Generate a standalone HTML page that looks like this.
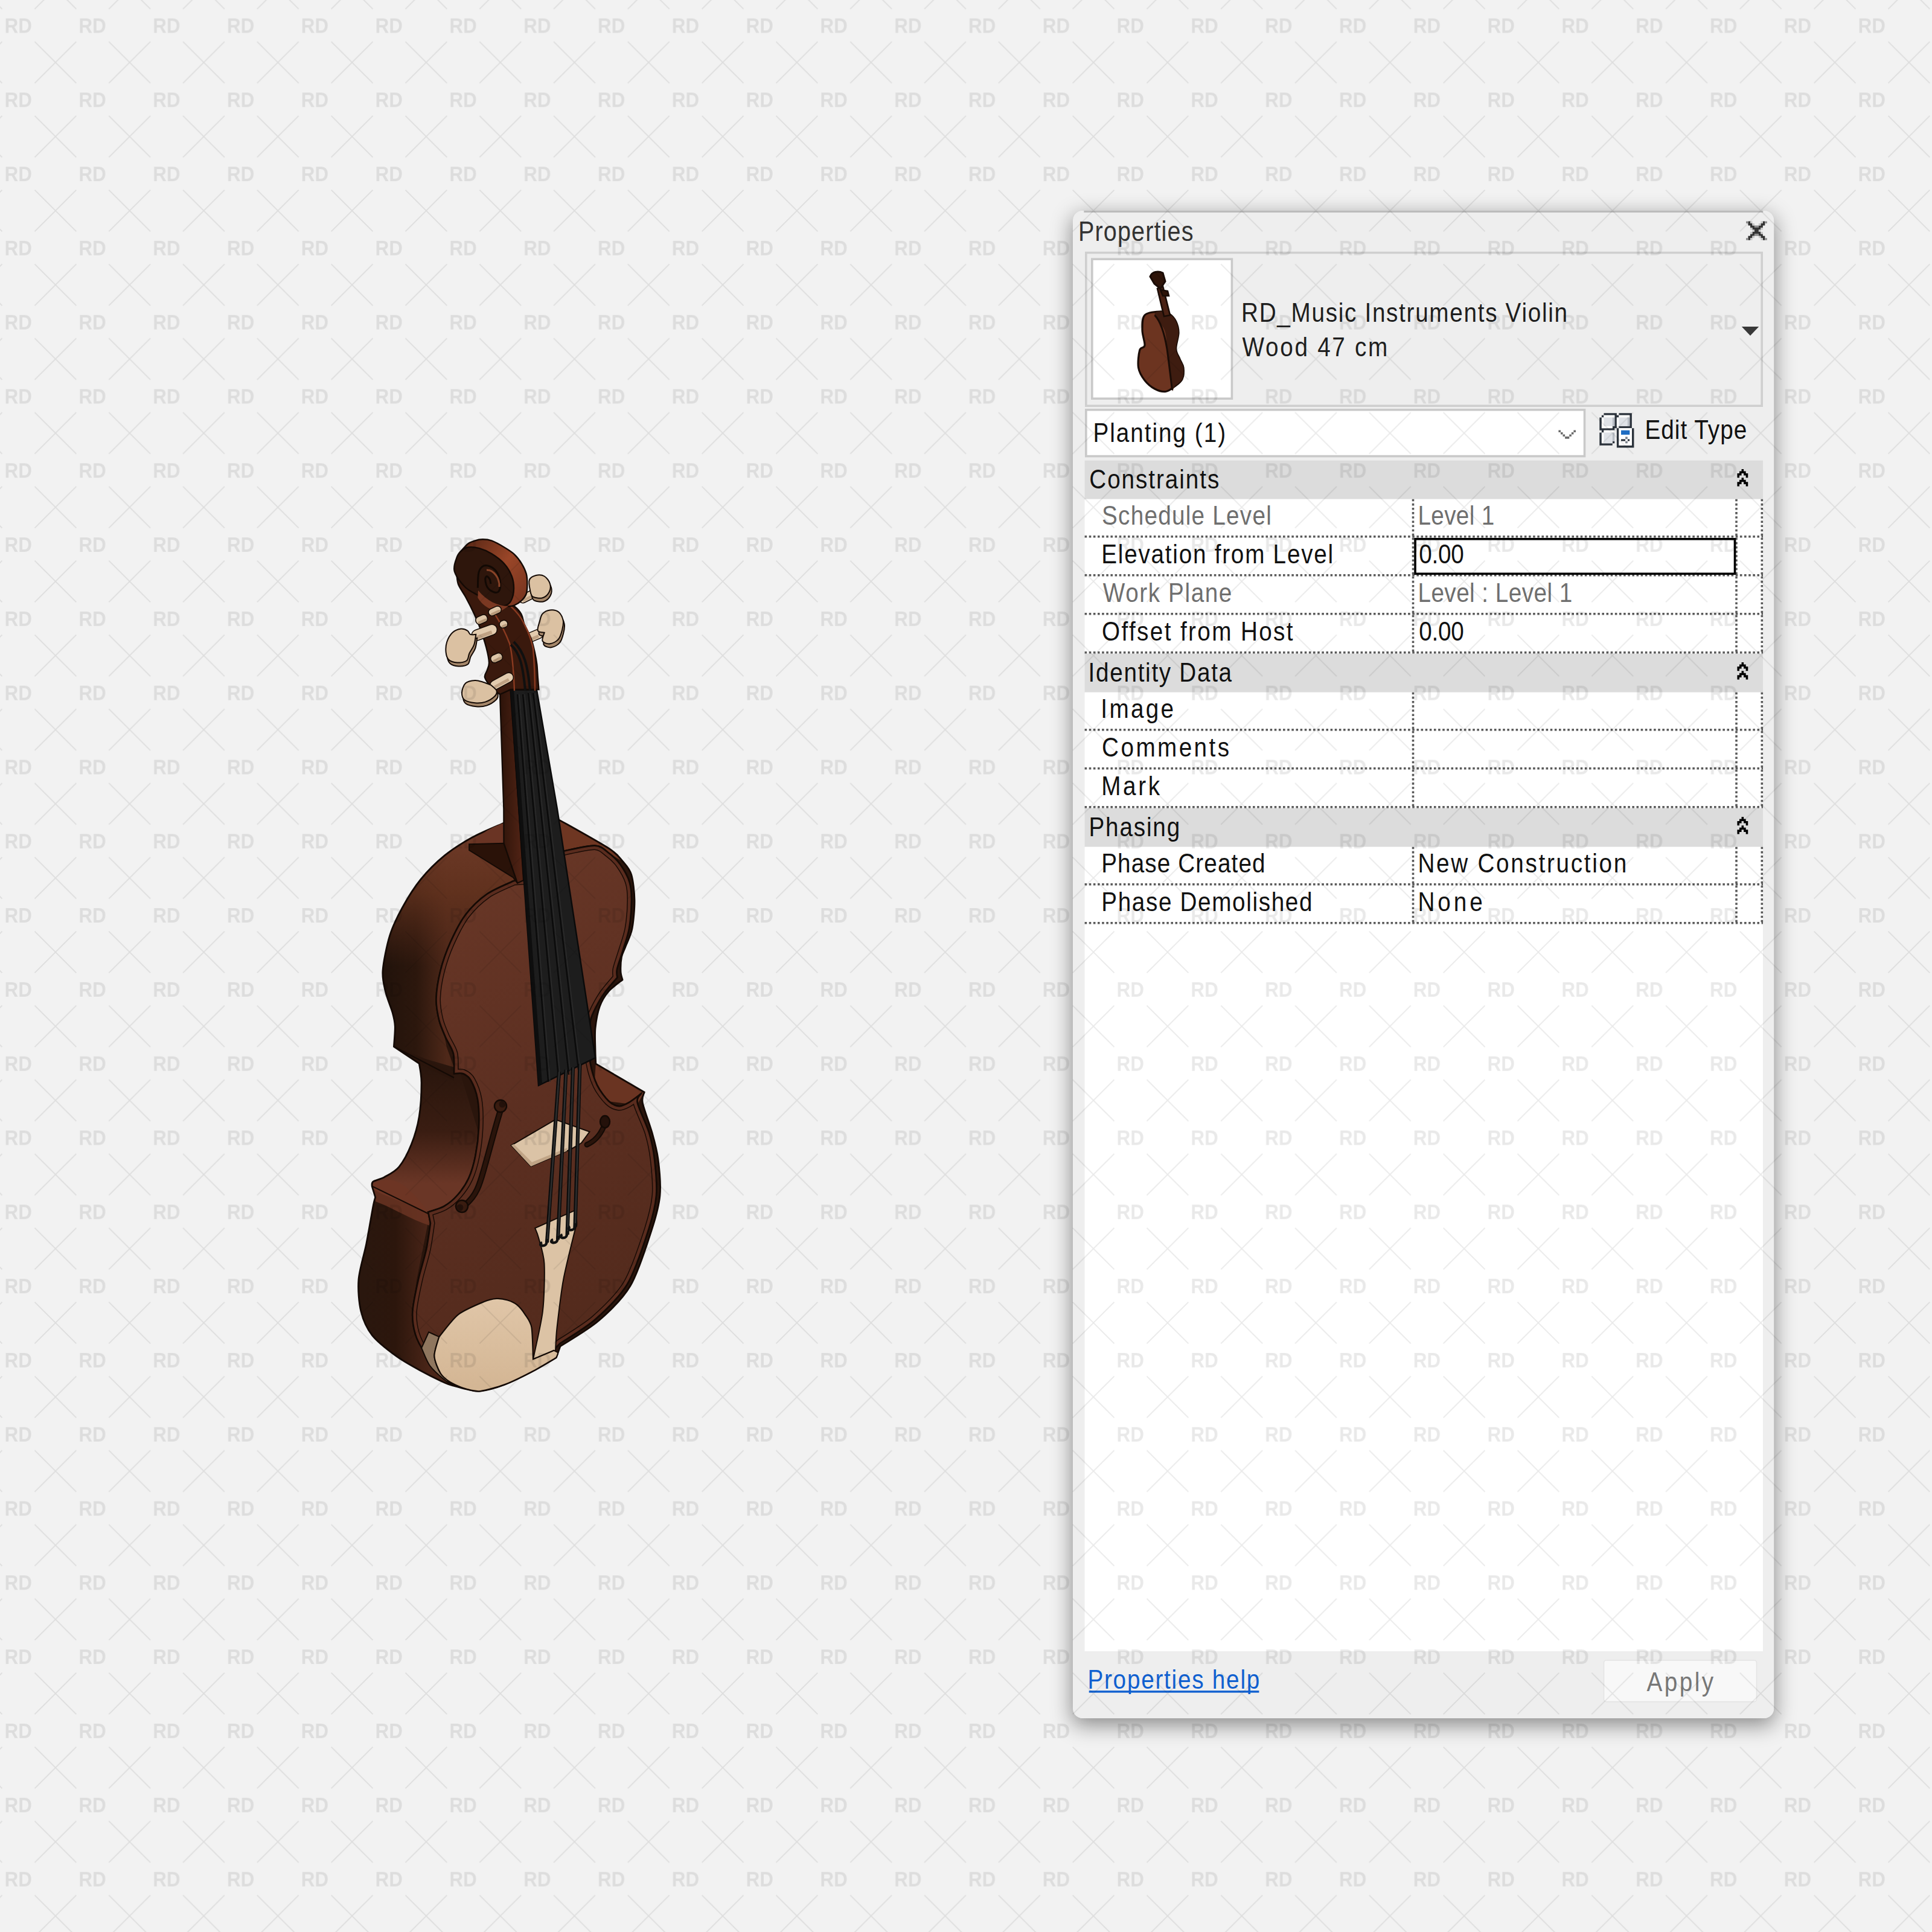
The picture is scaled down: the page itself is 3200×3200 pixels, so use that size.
<!DOCTYPE html>
<html><head><meta charset="utf-8"><style>
html,body{margin:0;padding:0;width:3200px;height:3200px;overflow:hidden;background:#f2f2f2}
#shadow{position:absolute;left:1777.3px;top:349.2px;width:1160.8999999999999px;height:2496.6000000000004px;border-radius:16px;box-shadow:0 10px 34px 2px rgba(0,0,0,0.42)}
svg{position:absolute;left:0;top:0}
</style></head><body>
<div id="shadow"></div>
<svg width="3200" height="3200" viewBox="0 0 3200 3200" font-family="'Liberation Sans'">
<defs><pattern id="wm" patternUnits="userSpaceOnUse" x="-30.90" y="-19.40" width="122.8" height="122.8">
<text x="38.35" y="73.40" font-size="35" font-weight="bold" textLength="45.44" lengthAdjust="spacingAndGlyphs" fill="#000" fill-opacity="0.088" font-family="'Liberation Sans'">RD</text>
<g stroke="#000" stroke-opacity="0.085" stroke-width="1.7" fill="none"><path d="M-34.4 -34.4L34.4 34.4M-34.4 34.4L34.4 -34.4"/><path d="M88.4 -34.4L157.2 34.4M88.4 34.4L157.2 -34.4"/><path d="M-34.4 88.4L34.4 157.2M-34.4 157.2L34.4 88.4"/><path d="M88.4 88.4L157.2 157.2M88.4 157.2L157.2 88.4"/></g>
</pattern></defs>

<rect x="1777.3" y="349.2" width="1160.8999999999999" height="2496.6000000000004" rx="16" ry="16" fill="#eeeeee"/>
<path d="M1795.3 350.5 L2920.2 350.5" stroke="#bbbbbb" stroke-width="2.8"/>
<g><path d="M2895.48 366.50h3.48v3.48h-3.48ZM2919.84 366.50h3.48v3.48h-3.48ZM2895.48 369.98h6.96v3.48h-6.96ZM2916.36 369.98h6.96v3.48h-6.96ZM2898.96 373.46h6.96v3.48h-6.96ZM2912.88 373.46h6.96v3.48h-6.96ZM2902.44 376.94h13.92v3.48h-13.92ZM2905.92 380.42h6.96v3.48h-6.96ZM2902.44 383.90h13.92v3.48h-13.92ZM2898.96 387.38h6.96v3.48h-6.96ZM2912.88 387.38h6.96v3.48h-6.96ZM2895.48 390.86h6.96v3.48h-6.96ZM2916.36 390.86h6.96v3.48h-6.96ZM2895.48 394.34h3.48v3.48h-3.48ZM2919.84 394.34h3.48v3.48h-3.48Z" fill="#333333"/><path d="M2892.00 366.50h3.48v3.48h-3.48ZM2923.32 366.50h3.48v3.48h-3.48ZM2905.92 373.46h6.96v3.48h-6.96ZM2905.92 387.38h6.96v3.48h-6.96ZM2892.00 394.34h3.48v3.48h-3.48ZM2923.32 394.34h3.48v3.48h-3.48Z" fill="#8c8c8c"/><path d="M2898.96 366.50h3.48v3.48h-3.48ZM2916.36 366.50h3.48v3.48h-3.48ZM2902.44 369.98h3.48v3.48h-3.48ZM2912.88 369.98h3.48v3.48h-3.48ZM2898.96 376.94h3.48v3.48h-3.48ZM2916.36 376.94h3.48v3.48h-3.48ZM2902.44 380.42h3.48v3.48h-3.48ZM2912.88 380.42h3.48v3.48h-3.48ZM2898.96 383.90h3.48v3.48h-3.48ZM2916.36 383.90h3.48v3.48h-3.48ZM2902.44 390.86h3.48v3.48h-3.48ZM2912.88 390.86h3.48v3.48h-3.48ZM2898.96 394.34h3.48v3.48h-3.48ZM2916.36 394.34h3.48v3.48h-3.48Z" fill="#c6c6c6"/></g>
<rect x="1798.8" y="418.6" width="1119.3999999999999" height="253.60000000000002" fill="none" stroke="#cfcfcf" stroke-width="3.6"/>
<rect x="1808.8" y="429.2" width="231.60000000000014" height="231.00000000000006" fill="#ffffff" stroke="#c9c9c9" stroke-width="3.6"/>
<path d="M1921.0 516.0 C1914.2 516.3 1900.8 516.8 1896.0 522.0 C1891.2 527.2 1892.0 538.7 1892.0 547.0 C1892.0 555.3 1896.7 566.5 1896.0 572.0 C1895.3 577.5 1889.4 573.8 1887.7 580.0 C1886.0 586.2 1884.2 600.7 1885.6 609.0 C1887.0 617.3 1891.5 624.2 1896.0 630.0 C1900.5 635.8 1906.7 640.9 1912.5 644.0 C1918.3 647.1 1925.5 649.2 1931.0 648.5 C1936.5 647.8 1941.1 643.4 1945.6 640.0 C1950.1 636.6 1955.6 633.2 1958.0 628.0 C1960.4 622.8 1960.7 614.5 1960.0 609.0 C1959.3 603.5 1956.0 599.9 1954.0 594.7 C1952.0 589.5 1948.0 585.3 1947.7 578.0 C1947.4 570.7 1952.0 558.6 1952.0 551.0 C1952.0 543.4 1950.2 537.7 1947.7 532.5 C1945.2 527.3 1941.5 522.8 1937.0 520.0 C1932.5 517.2 1927.8 515.7 1921.0 516.0 Z" fill="#6c3420" stroke="#1a0c06" stroke-width="3.2"/><path d="M1921.0 516.0 C1925.1 515.7 1932.5 517.2 1937.0 520.0 C1941.5 522.8 1945.2 527.3 1947.7 532.5 C1950.2 537.7 1952.0 543.4 1952.0 551.0 C1952.0 558.6 1947.4 570.7 1947.7 578.0 C1948.0 585.3 1952.0 589.5 1954.0 594.7 C1956.0 599.9 1959.3 603.5 1960.0 609.0 C1960.7 614.5 1960.4 622.8 1958.0 628.0 C1955.6 633.2 1948.3 637.0 1945.6 640.0 C1942.8 643.0 1942.9 651.2 1941.5 646.0 C1940.1 640.8 1938.4 620.3 1937.0 609.0 C1935.6 597.7 1934.3 588.3 1933.0 578.0 C1931.7 567.7 1932.4 556.3 1929.0 547.0 C1925.6 537.7 1913.8 527.2 1912.5 522.0 C1911.2 516.8 1916.9 516.3 1921.0 516.0 Z" fill="#3e1c10"/><path d="M1912.5 522 C1925 535 1930 560 1933 578 C1936 600 1939 625 1941.5 646" stroke="#1a0c06" stroke-width="3" fill="none"/><path d="M1917 478 L1926 474 L1938 522 L1928 524 Z" fill="#4a2214" stroke="#1a0c06" stroke-width="2.6"/><path d="M1905 458 C1908 450 1918 448 1926 452 L1930 466 L1922 478 L1912 470 Z" fill="#2e1409" stroke="#1a0c06" stroke-width="3"/><path d="M1922 480 L1934 482 L1936 490 L1926 490 Z" fill="#2e1409" stroke="#1a0c06" stroke-width="2.5"/>
<path d="M2884.8 541.1 L2913.2 541.1 L2899 556 Z" fill="#383838"/>
<rect x="1798.8" y="678.8" width="825.7" height="76.80000000000007" fill="#ffffff" stroke="#c9c9c9" stroke-width="3.6"/>
<path d="M2581.40 712.40h3.57v3.57h-3.57ZM2606.39 712.40h3.57v3.57h-3.57ZM2584.97 715.97h3.57v3.57h-3.57ZM2602.82 715.97h3.57v3.57h-3.57ZM2588.54 719.54h3.57v3.57h-3.57ZM2599.25 719.54h3.57v3.57h-3.57ZM2592.11 723.11h3.57v3.57h-3.57ZM2595.68 723.11h3.57v3.57h-3.57Z" fill="#6a6a6a"/>
<g><path d="M2656.44 684.30h21.42v3.57h-21.42ZM2681.43 684.30h21.42v3.57h-21.42ZM2652.87 687.87h3.57v3.57h-3.57ZM2674.29 687.87h7.14v3.57h-7.14ZM2699.28 687.87h3.57v3.57h-3.57ZM2649.30 691.44h3.57v3.57h-3.57ZM2674.29 691.44h3.57v3.57h-3.57ZM2699.28 691.44h3.57v3.57h-3.57ZM2649.30 695.01h3.57v3.57h-3.57ZM2674.29 695.01h3.57v3.57h-3.57ZM2699.28 695.01h3.57v3.57h-3.57ZM2649.30 698.58h3.57v3.57h-3.57ZM2674.29 698.58h3.57v3.57h-3.57ZM2699.28 698.58h3.57v3.57h-3.57ZM2649.30 702.15h3.57v3.57h-3.57ZM2674.29 702.15h3.57v3.57h-3.57ZM2699.28 702.15h3.57v3.57h-3.57ZM2649.30 705.72h3.57v3.57h-3.57ZM2670.72 705.72h7.14v3.57h-7.14ZM2681.43 705.72h21.42v3.57h-21.42ZM2649.30 709.29h24.99v3.57h-24.99ZM2677.86 709.29h3.57v3.57h-3.57ZM2702.85 709.29h3.57v3.57h-3.57ZM2652.87 712.86h3.57v3.57h-3.57ZM2677.86 712.86h3.57v3.57h-3.57ZM2702.85 712.86h3.57v3.57h-3.57ZM2649.30 716.43h3.57v3.57h-3.57ZM2677.86 716.43h3.57v3.57h-3.57ZM2702.85 716.43h3.57v3.57h-3.57ZM2649.30 720.00h3.57v3.57h-3.57ZM2677.86 720.00h3.57v3.57h-3.57ZM2702.85 720.00h3.57v3.57h-3.57ZM2649.30 723.57h3.57v3.57h-3.57ZM2677.86 723.57h3.57v3.57h-3.57ZM2702.85 723.57h3.57v3.57h-3.57ZM2649.30 727.14h3.57v3.57h-3.57ZM2677.86 727.14h3.57v3.57h-3.57ZM2685.00 727.14h7.14v3.57h-7.14ZM2695.71 727.14h3.57v3.57h-3.57ZM2702.85 727.14h3.57v3.57h-3.57ZM2649.30 730.71h3.57v3.57h-3.57ZM2670.72 730.71h3.57v3.57h-3.57ZM2677.86 730.71h3.57v3.57h-3.57ZM2702.85 730.71h3.57v3.57h-3.57ZM2649.30 734.28h21.42v3.57h-21.42ZM2677.86 734.28h3.57v3.57h-3.57ZM2702.85 734.28h3.57v3.57h-3.57ZM2677.86 737.85h28.56v3.57h-28.56Z" fill="#2b323b"/><path d="M2656.44 687.87h17.85v3.57h-17.85ZM2681.43 687.87h17.85v3.57h-17.85ZM2652.87 691.44h3.57v3.57h-3.57ZM2677.86 691.44h3.57v3.57h-3.57ZM2652.87 695.01h3.57v3.57h-3.57ZM2677.86 695.01h3.57v3.57h-3.57ZM2652.87 698.58h3.57v3.57h-3.57ZM2677.86 698.58h3.57v3.57h-3.57ZM2652.87 702.15h3.57v3.57h-3.57ZM2677.86 702.15h3.57v3.57h-3.57ZM2652.87 705.72h17.85v3.57h-17.85ZM2681.43 709.29h21.42v3.57h-21.42ZM2656.44 712.86h17.85v3.57h-17.85ZM2681.43 712.86h3.57v3.57h-3.57ZM2699.28 712.86h3.57v3.57h-3.57ZM2652.87 716.43h3.57v3.57h-3.57ZM2681.43 716.43h3.57v3.57h-3.57ZM2699.28 716.43h3.57v3.57h-3.57ZM2652.87 720.00h3.57v3.57h-3.57ZM2681.43 720.00h21.42v3.57h-21.42ZM2652.87 723.57h3.57v3.57h-3.57ZM2681.43 723.57h10.71v3.57h-10.71ZM2695.71 723.57h7.14v3.57h-7.14ZM2652.87 727.14h3.57v3.57h-3.57ZM2681.43 727.14h3.57v3.57h-3.57ZM2692.14 727.14h3.57v3.57h-3.57ZM2699.28 727.14h3.57v3.57h-3.57ZM2652.87 730.71h3.57v3.57h-3.57ZM2681.43 730.71h10.71v3.57h-10.71ZM2695.71 730.71h7.14v3.57h-7.14ZM2681.43 734.28h21.42v3.57h-21.42Z" fill="#ffffff"/><path d="M2656.44 691.44h14.28v3.57h-14.28ZM2681.43 691.44h14.28v3.57h-14.28ZM2656.44 695.01h14.28v3.57h-14.28ZM2681.43 695.01h14.28v3.57h-14.28ZM2656.44 698.58h14.28v3.57h-14.28ZM2681.43 698.58h14.28v3.57h-14.28ZM2656.44 702.15h14.28v3.57h-14.28ZM2681.43 702.15h14.28v3.57h-14.28ZM2656.44 716.43h14.28v3.57h-14.28ZM2656.44 720.00h14.28v3.57h-14.28ZM2656.44 723.57h14.28v3.57h-14.28ZM2656.44 727.14h14.28v3.57h-14.28ZM2656.44 730.71h14.28v3.57h-14.28Z" fill="#dfe2e7"/><path d="M2670.72 691.44h3.57v3.57h-3.57ZM2695.71 691.44h3.57v3.57h-3.57ZM2670.72 695.01h3.57v3.57h-3.57ZM2695.71 695.01h3.57v3.57h-3.57ZM2670.72 698.58h3.57v3.57h-3.57ZM2695.71 698.58h3.57v3.57h-3.57ZM2670.72 702.15h3.57v3.57h-3.57ZM2695.71 702.15h3.57v3.57h-3.57ZM2670.72 716.43h3.57v3.57h-3.57ZM2670.72 720.00h3.57v3.57h-3.57ZM2670.72 723.57h3.57v3.57h-3.57ZM2670.72 727.14h3.57v3.57h-3.57Z" fill="#b9bec6"/><path d="M2685.00 712.86h14.28v3.57h-14.28ZM2685.00 716.43h14.28v3.57h-14.28Z" fill="#1f6dc2"/><path d="M2692.14 723.57h3.57v3.57h-3.57ZM2692.14 730.71h3.57v3.57h-3.57Z" fill="#7a808a"/></g>
<rect x="1796.6" y="762.7" width="1123.4" height="64.0" fill="#dcdcdc"/><path d="M2884.54 776.90 L2888.11 776.90 L2888.11 780.47 L2891.68 780.47 L2891.68 784.04 L2895.25 784.04 L2895.25 791.18 L2891.68 791.18 L2891.68 787.61 L2888.11 787.61 L2888.11 784.04 L2884.54 784.04 L2884.54 787.61 L2880.97 787.61 L2880.97 791.18 L2877.40 791.18 L2877.40 784.04 L2880.97 784.04 L2880.97 780.47 L2884.54 780.47 Z M2884.54 791.18 L2888.11 791.18 L2888.11 794.75 L2891.68 794.75 L2891.68 798.32 L2895.25 798.32 L2895.25 805.46 L2891.68 805.46 L2891.68 801.89 L2888.11 801.89 L2888.11 798.32 L2884.54 798.32 L2884.54 801.89 L2880.97 801.89 L2880.97 805.46 L2877.40 805.46 L2877.40 798.32 L2880.97 798.32 L2880.97 794.75 L2884.54 794.75 Z " fill="#000"/><rect x="1796.6" y="826.7" width="1123.4" height="64.0" fill="#ffffff"/><line x1="1796.6" y1="888.9000000000001" x2="2920.0" y2="888.9000000000001" stroke="#5a5a5a" stroke-width="3.57" stroke-dasharray="3.57 3.57"/><line x1="2340.5" y1="826.7" x2="2340.5" y2="890.7" stroke="#5a5a5a" stroke-width="3.57" stroke-dasharray="3.57 3.57"/><line x1="2876.0" y1="826.7" x2="2876.0" y2="890.7" stroke="#5a5a5a" stroke-width="3.57" stroke-dasharray="3.57 3.57"/><line x1="2918.3" y1="826.7" x2="2918.3" y2="890.7" stroke="#5a5a5a" stroke-width="3.57" stroke-dasharray="3.57 3.57"/><rect x="1796.6" y="890.7" width="1123.4" height="64.0" fill="#ffffff"/><line x1="1796.6" y1="952.9000000000001" x2="2920.0" y2="952.9000000000001" stroke="#5a5a5a" stroke-width="3.57" stroke-dasharray="3.57 3.57"/><line x1="2340.5" y1="890.7" x2="2340.5" y2="954.7" stroke="#5a5a5a" stroke-width="3.57" stroke-dasharray="3.57 3.57"/><line x1="2876.0" y1="890.7" x2="2876.0" y2="954.7" stroke="#5a5a5a" stroke-width="3.57" stroke-dasharray="3.57 3.57"/><line x1="2918.3" y1="890.7" x2="2918.3" y2="954.7" stroke="#5a5a5a" stroke-width="3.57" stroke-dasharray="3.57 3.57"/><rect x="1796.6" y="954.7" width="1123.4" height="64.0" fill="#ffffff"/><line x1="1796.6" y1="1016.9000000000001" x2="2920.0" y2="1016.9000000000001" stroke="#5a5a5a" stroke-width="3.57" stroke-dasharray="3.57 3.57"/><line x1="2340.5" y1="954.7" x2="2340.5" y2="1018.7" stroke="#5a5a5a" stroke-width="3.57" stroke-dasharray="3.57 3.57"/><line x1="2876.0" y1="954.7" x2="2876.0" y2="1018.7" stroke="#5a5a5a" stroke-width="3.57" stroke-dasharray="3.57 3.57"/><line x1="2918.3" y1="954.7" x2="2918.3" y2="1018.7" stroke="#5a5a5a" stroke-width="3.57" stroke-dasharray="3.57 3.57"/><rect x="1796.6" y="1018.7" width="1123.4" height="64.0" fill="#ffffff"/><line x1="1796.6" y1="1080.9" x2="2920.0" y2="1080.9" stroke="#5a5a5a" stroke-width="3.57" stroke-dasharray="3.57 3.57"/><line x1="2340.5" y1="1018.7" x2="2340.5" y2="1082.7" stroke="#5a5a5a" stroke-width="3.57" stroke-dasharray="3.57 3.57"/><line x1="2876.0" y1="1018.7" x2="2876.0" y2="1082.7" stroke="#5a5a5a" stroke-width="3.57" stroke-dasharray="3.57 3.57"/><line x1="2918.3" y1="1018.7" x2="2918.3" y2="1082.7" stroke="#5a5a5a" stroke-width="3.57" stroke-dasharray="3.57 3.57"/><rect x="1796.6" y="1082.7" width="1123.4" height="64.0" fill="#dcdcdc"/><path d="M2884.54 1096.90 L2888.11 1096.90 L2888.11 1100.47 L2891.68 1100.47 L2891.68 1104.04 L2895.25 1104.04 L2895.25 1111.18 L2891.68 1111.18 L2891.68 1107.61 L2888.11 1107.61 L2888.11 1104.04 L2884.54 1104.04 L2884.54 1107.61 L2880.97 1107.61 L2880.97 1111.18 L2877.40 1111.18 L2877.40 1104.04 L2880.97 1104.04 L2880.97 1100.47 L2884.54 1100.47 Z M2884.54 1111.18 L2888.11 1111.18 L2888.11 1114.75 L2891.68 1114.75 L2891.68 1118.32 L2895.25 1118.32 L2895.25 1125.46 L2891.68 1125.46 L2891.68 1121.89 L2888.11 1121.89 L2888.11 1118.32 L2884.54 1118.32 L2884.54 1121.89 L2880.97 1121.89 L2880.97 1125.46 L2877.40 1125.46 L2877.40 1118.32 L2880.97 1118.32 L2880.97 1114.75 L2884.54 1114.75 Z " fill="#000"/><rect x="1796.6" y="1146.7" width="1123.4" height="64.0" fill="#ffffff"/><line x1="1796.6" y1="1208.9" x2="2920.0" y2="1208.9" stroke="#5a5a5a" stroke-width="3.57" stroke-dasharray="3.57 3.57"/><line x1="2340.5" y1="1146.7" x2="2340.5" y2="1210.7" stroke="#5a5a5a" stroke-width="3.57" stroke-dasharray="3.57 3.57"/><line x1="2876.0" y1="1146.7" x2="2876.0" y2="1210.7" stroke="#5a5a5a" stroke-width="3.57" stroke-dasharray="3.57 3.57"/><line x1="2918.3" y1="1146.7" x2="2918.3" y2="1210.7" stroke="#5a5a5a" stroke-width="3.57" stroke-dasharray="3.57 3.57"/><rect x="1796.6" y="1210.7" width="1123.4" height="64.0" fill="#ffffff"/><line x1="1796.6" y1="1272.9" x2="2920.0" y2="1272.9" stroke="#5a5a5a" stroke-width="3.57" stroke-dasharray="3.57 3.57"/><line x1="2340.5" y1="1210.7" x2="2340.5" y2="1274.7" stroke="#5a5a5a" stroke-width="3.57" stroke-dasharray="3.57 3.57"/><line x1="2876.0" y1="1210.7" x2="2876.0" y2="1274.7" stroke="#5a5a5a" stroke-width="3.57" stroke-dasharray="3.57 3.57"/><line x1="2918.3" y1="1210.7" x2="2918.3" y2="1274.7" stroke="#5a5a5a" stroke-width="3.57" stroke-dasharray="3.57 3.57"/><rect x="1796.6" y="1274.7" width="1123.4" height="64.0" fill="#ffffff"/><line x1="1796.6" y1="1336.9" x2="2920.0" y2="1336.9" stroke="#5a5a5a" stroke-width="3.57" stroke-dasharray="3.57 3.57"/><line x1="2340.5" y1="1274.7" x2="2340.5" y2="1338.7" stroke="#5a5a5a" stroke-width="3.57" stroke-dasharray="3.57 3.57"/><line x1="2876.0" y1="1274.7" x2="2876.0" y2="1338.7" stroke="#5a5a5a" stroke-width="3.57" stroke-dasharray="3.57 3.57"/><line x1="2918.3" y1="1274.7" x2="2918.3" y2="1338.7" stroke="#5a5a5a" stroke-width="3.57" stroke-dasharray="3.57 3.57"/><rect x="1796.6" y="1338.7" width="1123.4" height="64.0" fill="#dcdcdc"/><path d="M2884.54 1352.90 L2888.11 1352.90 L2888.11 1356.47 L2891.68 1356.47 L2891.68 1360.04 L2895.25 1360.04 L2895.25 1367.18 L2891.68 1367.18 L2891.68 1363.61 L2888.11 1363.61 L2888.11 1360.04 L2884.54 1360.04 L2884.54 1363.61 L2880.97 1363.61 L2880.97 1367.18 L2877.40 1367.18 L2877.40 1360.04 L2880.97 1360.04 L2880.97 1356.47 L2884.54 1356.47 Z M2884.54 1367.18 L2888.11 1367.18 L2888.11 1370.75 L2891.68 1370.75 L2891.68 1374.32 L2895.25 1374.32 L2895.25 1381.46 L2891.68 1381.46 L2891.68 1377.89 L2888.11 1377.89 L2888.11 1374.32 L2884.54 1374.32 L2884.54 1377.89 L2880.97 1377.89 L2880.97 1381.46 L2877.40 1381.46 L2877.40 1374.32 L2880.97 1374.32 L2880.97 1370.75 L2884.54 1370.75 Z " fill="#000"/><rect x="1796.6" y="1402.7" width="1123.4" height="64.0" fill="#ffffff"/><line x1="1796.6" y1="1464.9" x2="2920.0" y2="1464.9" stroke="#5a5a5a" stroke-width="3.57" stroke-dasharray="3.57 3.57"/><line x1="2340.5" y1="1402.7" x2="2340.5" y2="1466.7" stroke="#5a5a5a" stroke-width="3.57" stroke-dasharray="3.57 3.57"/><line x1="2876.0" y1="1402.7" x2="2876.0" y2="1466.7" stroke="#5a5a5a" stroke-width="3.57" stroke-dasharray="3.57 3.57"/><line x1="2918.3" y1="1402.7" x2="2918.3" y2="1466.7" stroke="#5a5a5a" stroke-width="3.57" stroke-dasharray="3.57 3.57"/><rect x="1796.6" y="1466.7" width="1123.4" height="64.0" fill="#ffffff"/><line x1="1796.6" y1="1528.9" x2="2920.0" y2="1528.9" stroke="#5a5a5a" stroke-width="3.57" stroke-dasharray="3.57 3.57"/><line x1="2340.5" y1="1466.7" x2="2340.5" y2="1530.7" stroke="#5a5a5a" stroke-width="3.57" stroke-dasharray="3.57 3.57"/><line x1="2876.0" y1="1466.7" x2="2876.0" y2="1530.7" stroke="#5a5a5a" stroke-width="3.57" stroke-dasharray="3.57 3.57"/><line x1="2918.3" y1="1466.7" x2="2918.3" y2="1530.7" stroke="#5a5a5a" stroke-width="3.57" stroke-dasharray="3.57 3.57"/><rect x="2344.0" y="892.8000000000001" width="529.5" height="57.5" fill="#fff" stroke="#000" stroke-width="3.6"/>
<rect x="1796.6" y="1530.7" width="1123.4" height="1204.3" fill="#ffffff"/>
<rect x="2656.5" y="2750" width="253" height="68.6" rx="4" fill="#f8f8f8" stroke="#e4e4e4" stroke-width="1.6"/>
<rect x="1803.7" y="2800.2" width="281.7" height="3.4" fill="#1060d0"/>

<text transform="translate(1785.92 398.60) scale(0.86 1)" font-size="46" fill="#333333" font-weight="normal" textLength="221.56" lengthAdjust="spacing" >Properties</text>
<text transform="translate(2056.02 533.40) scale(0.86 1)" font-size="45" fill="#1e1e1e" font-weight="normal" textLength="627.93" lengthAdjust="spacing" >RD_Music Instruments Violin</text>
<text transform="translate(2057.50 590.00) scale(0.86 1)" font-size="45" fill="#1e1e1e" font-weight="normal" textLength="280.04" lengthAdjust="spacing" >Wood 47 cm</text>
<text transform="translate(1810.42 732.30) scale(0.86 1)" font-size="45" fill="#111111" font-weight="normal" textLength="255.45" lengthAdjust="spacing" >Planting (1)</text>
<text transform="translate(2724.42 726.70) scale(0.86 1)" font-size="45" fill="#111111" font-weight="normal" textLength="196.35" lengthAdjust="spacing" >Edit Type</text>
<text transform="translate(1804.28 809.20) scale(0.86 1)" font-size="45" fill="#111111" font-weight="normal" textLength="250.01" lengthAdjust="spacing" >Constraints</text>
<text transform="translate(1825.08 869.30) scale(0.86 1)" font-size="45" fill="#6f6f6f" font-weight="normal" textLength="326.39" lengthAdjust="spacing" >Schedule Level</text>
<text transform="translate(2348.42 869.30) scale(0.86 1)" font-size="45" fill="#6f6f6f" font-weight="normal" textLength="147.58" lengthAdjust="spacing" >Level 1</text>
<text transform="translate(1824.22 933.30) scale(0.86 1)" font-size="45" fill="#111111" font-weight="normal" textLength="446.46" lengthAdjust="spacing" >Elevation from Level</text>
<text transform="translate(2350.14 933.30) scale(0.86 1)" font-size="45" fill="#111111" font-weight="normal" textLength="86.91" lengthAdjust="spacing" >0.00</text>
<text transform="translate(1826.80 997.30) scale(0.86 1)" font-size="45" fill="#6f6f6f" font-weight="normal" textLength="248.35" lengthAdjust="spacing" >Work Plane</text>
<text transform="translate(2348.42 997.30) scale(0.86 1)" font-size="45" fill="#6f6f6f" font-weight="normal" textLength="297.47" lengthAdjust="spacing" >Level : Level 1</text>
<text transform="translate(1825.08 1061.30) scale(0.86 1)" font-size="45" fill="#111111" font-weight="normal" textLength="368.01" lengthAdjust="spacing" >Offset from Host</text>
<text transform="translate(2350.14 1061.30) scale(0.86 1)" font-size="45" fill="#111111" font-weight="normal" textLength="86.91" lengthAdjust="spacing" >0.00</text>
<text transform="translate(1802.56 1129.20) scale(0.86 1)" font-size="45" fill="#111111" font-weight="normal" textLength="276.28" lengthAdjust="spacing" >Identity Data</text>
<text transform="translate(1823.36 1189.30) scale(0.86 1)" font-size="45" fill="#111111" font-weight="normal" textLength="140.38" lengthAdjust="spacing" >Image</text>
<text transform="translate(1825.08 1253.30) scale(0.86 1)" font-size="45" fill="#111111" font-weight="normal" textLength="245.36" lengthAdjust="spacing" >Comments</text>
<text transform="translate(1824.22 1317.30) scale(0.86 1)" font-size="45" fill="#111111" font-weight="normal" textLength="112.62" lengthAdjust="spacing" >Mark</text>
<text transform="translate(1803.42 1385.20) scale(0.86 1)" font-size="45" fill="#111111" font-weight="normal" textLength="175.38" lengthAdjust="spacing" >Phasing</text>
<text transform="translate(1824.22 1445.30) scale(0.86 1)" font-size="45" fill="#111111" font-weight="normal" textLength="315.49" lengthAdjust="spacing" >Phase Created</text>
<text transform="translate(2348.42 1445.30) scale(0.86 1)" font-size="45" fill="#111111" font-weight="normal" textLength="402.24" lengthAdjust="spacing" >New Construction</text>
<text transform="translate(1824.22 1509.30) scale(0.86 1)" font-size="45" fill="#111111" font-weight="normal" textLength="406.19" lengthAdjust="spacing" >Phase Demolished</text>
<text transform="translate(2348.42 1509.30) scale(0.86 1)" font-size="45" fill="#111111" font-weight="normal" textLength="124.72" lengthAdjust="spacing" >None</text>
<text transform="translate(1801.42 2796.50) scale(0.86 1)" font-size="45" fill="#1060d0" font-weight="normal" textLength="331.24" lengthAdjust="spacing" >Properties help</text>
<text transform="translate(2727.50 2800.50) scale(0.86 1)" font-size="45" fill="#777777" font-weight="normal" textLength="128.57" lengthAdjust="spacing" >Apply</text>
<defs>
<linearGradient id="ribU" x1="640" y1="0" x2="740" y2="0" gradientUnits="userSpaceOnUse">
 <stop offset="0" stop-color="#22130b"/><stop offset="0.5" stop-color="#2c170d"/><stop offset="1" stop-color="#4e2819"/></linearGradient>
<linearGradient id="ribTop" x1="0" y1="1380" x2="0" y2="1600" gradientUnits="userSpaceOnUse">
 <stop offset="0" stop-color="#6e3a28" stop-opacity="1"/><stop offset="0.45" stop-color="#66341f" stop-opacity="0.75"/><stop offset="1" stop-color="#5a2c1c" stop-opacity="0"/></linearGradient>
<linearGradient id="ribCB" x1="0" y1="1770" x2="0" y2="1960" gradientUnits="userSpaceOnUse">
 <stop offset="0" stop-color="#2a160d"/><stop offset="0.55" stop-color="#3a1d12"/><stop offset="1" stop-color="#6a3626"/></linearGradient>
<linearGradient id="ribL" x1="600" y1="0" x2="710" y2="0" gradientUnits="userSpaceOnUse">
 <stop offset="0" stop-color="#2a170e"/><stop offset="0.5" stop-color="#2c160c"/><stop offset="1" stop-color="#4a2518"/></linearGradient>
<linearGradient id="plateG" x1="730" y1="1500" x2="1080" y2="2200" gradientUnits="userSpaceOnUse">
 <stop offset="0" stop-color="#673626"/><stop offset="0.45" stop-color="#5c2f21"/><stop offset="1" stop-color="#522a1c"/></linearGradient>
<linearGradient id="tanG" x1="0" y1="2150" x2="0" y2="2305" gradientUnits="userSpaceOnUse">
 <stop offset="0" stop-color="#e0c6a8"/><stop offset="1" stop-color="#d3b593"/></linearGradient>
<linearGradient id="neckG" x1="828" y1="0" x2="862" y2="0" gradientUnits="userSpaceOnUse">
 <stop offset="0" stop-color="#2c1309"/><stop offset="1" stop-color="#4e2214"/></linearGradient>
<linearGradient id="rimG" x1="770" y1="900" x2="875" y2="980" gradientUnits="userSpaceOnUse">
 <stop offset="0" stop-color="#5a2816"/><stop offset="0.55" stop-color="#9a4628"/><stop offset="1" stop-color="#7a3620"/></linearGradient>
<clipPath id="silClip"><path d="M834.3 1363.3 C826.6 1366.8 797.7 1378.6 783.0 1386.6 C768.3 1394.6 749.4 1406.4 736.5 1416.9 C723.6 1427.4 707.4 1443.6 696.9 1456.5 C686.4 1469.4 674.3 1489.0 666.6 1503.0 C658.9 1517.0 650.5 1533.9 645.6 1549.6 C640.7 1565.3 635.0 1593.9 634.0 1607.9 C633.0 1621.9 636.2 1632.3 638.6 1642.8 C641.0 1653.3 647.9 1669.2 650.3 1677.8 C652.7 1686.4 654.0 1691.6 654.3 1700.0 C654.6 1708.4 652.7 1728.5 652.4 1733.5 C658.7 1737.7 688.0 1757.3 694.3 1761.5 C694.9 1766.3 698.1 1780.1 698.1 1793.2 C698.1 1806.3 696.8 1833.7 694.3 1849.1 C691.8 1864.5 686.3 1883.0 681.3 1895.6 C676.3 1908.2 667.5 1924.8 660.8 1932.9 C654.1 1941.0 643.0 1946.1 636.6 1949.7 C630.2 1953.3 621.1 1954.9 618.0 1957.1 C614.9 1959.3 616.4 1963.5 616.1 1964.6 C616.9 1967.4 620.9 1980.4 621.7 1983.2 C621.1 1985.4 620.2 1986.6 618.0 1998.1 C615.8 2009.6 610.4 2041.8 606.8 2060.0 C603.2 2078.2 595.3 2102.4 594.0 2119.2 C592.7 2136.0 594.5 2158.1 597.9 2172.0 C601.3 2185.9 607.7 2200.5 616.4 2211.6 C625.1 2222.7 644.1 2237.2 656.0 2245.9 C667.9 2254.6 683.3 2263.0 695.6 2269.7 C707.9 2276.4 729.1 2286.9 737.8 2290.8 C746.5 2294.7 748.2 2294.4 753.7 2296.0 C759.2 2297.6 768.5 2300.1 774.8 2301.3 C781.1 2302.5 786.8 2305.2 795.9 2304.0 C805.0 2302.8 822.8 2298.2 835.5 2293.4 C848.2 2288.6 867.5 2279.0 880.4 2272.3 C893.3 2265.6 915.2 2252.2 921.3 2248.6 C922.3 2245.8 926.9 2232.8 927.9 2230.0 C937.4 2223.7 973.9 2202.8 991.3 2187.8 C1008.7 2172.8 1030.9 2152.0 1044.0 2129.8 C1057.1 2107.6 1071.1 2062.5 1078.4 2040.0 C1085.8 2017.5 1091.3 1998.0 1093.0 1980.0 C1094.7 1962.0 1092.0 1935.6 1090.0 1920.0 C1088.0 1904.4 1083.9 1890.0 1080.0 1876.0 C1076.1 1862.0 1066.2 1836.5 1064.3 1826.4 C1062.4 1816.4 1066.8 1811.6 1067.2 1809.0 C1055.1 1802.0 998.9 1769.0 986.8 1762.0 C986.7 1758.6 986.1 1748.2 986.0 1739.4 C985.9 1730.6 984.9 1714.1 986.0 1703.2 C987.1 1692.3 990.0 1676.1 993.3 1667.0 C996.6 1657.9 1002.1 1648.9 1007.8 1642.3 C1013.5 1635.7 1027.5 1625.7 1031.0 1622.8 C1030.5 1620.7 1028.2 1614.7 1028.0 1609.0 C1027.8 1603.3 1028.3 1591.2 1029.5 1585.0 C1030.7 1578.8 1033.4 1575.0 1036.0 1568.0 C1038.6 1561.0 1044.8 1549.5 1047.0 1538.0 C1049.2 1526.5 1051.2 1504.4 1051.0 1491.0 C1050.8 1477.6 1048.6 1458.3 1045.7 1448.7 C1042.8 1439.1 1037.3 1433.5 1031.7 1427.0 C1026.1 1420.5 1024.5 1415.7 1008.4 1405.2 C992.3 1394.7 937.2 1364.3 924.6 1357.1 C914.9 1356.8 869.7 1355.3 860.0 1355.0 C856.1 1356.2 838.2 1362.1 834.3 1363.3 Z"/></clipPath>
</defs>
<path d="M834.3 1363.3 C826.6 1366.8 797.7 1378.6 783.0 1386.6 C768.3 1394.6 749.4 1406.4 736.5 1416.9 C723.6 1427.4 707.4 1443.6 696.9 1456.5 C686.4 1469.4 674.3 1489.0 666.6 1503.0 C658.9 1517.0 650.5 1533.9 645.6 1549.6 C640.7 1565.3 635.0 1593.9 634.0 1607.9 C633.0 1621.9 636.2 1632.3 638.6 1642.8 C641.0 1653.3 647.9 1669.2 650.3 1677.8 C652.7 1686.4 654.0 1691.6 654.3 1700.0 C654.6 1708.4 652.7 1728.5 652.4 1733.5 C658.7 1737.7 688.0 1757.3 694.3 1761.5 C694.9 1766.3 698.1 1780.1 698.1 1793.2 C698.1 1806.3 696.8 1833.7 694.3 1849.1 C691.8 1864.5 686.3 1883.0 681.3 1895.6 C676.3 1908.2 667.5 1924.8 660.8 1932.9 C654.1 1941.0 643.0 1946.1 636.6 1949.7 C630.2 1953.3 621.1 1954.9 618.0 1957.1 C614.9 1959.3 616.4 1963.5 616.1 1964.6 C616.9 1967.4 620.9 1980.4 621.7 1983.2 C621.1 1985.4 620.2 1986.6 618.0 1998.1 C615.8 2009.6 610.4 2041.8 606.8 2060.0 C603.2 2078.2 595.3 2102.4 594.0 2119.2 C592.7 2136.0 594.5 2158.1 597.9 2172.0 C601.3 2185.9 607.7 2200.5 616.4 2211.6 C625.1 2222.7 644.1 2237.2 656.0 2245.9 C667.9 2254.6 683.3 2263.0 695.6 2269.7 C707.9 2276.4 729.1 2286.9 737.8 2290.8 C746.5 2294.7 748.2 2294.4 753.7 2296.0 C759.2 2297.6 768.5 2300.1 774.8 2301.3 C781.1 2302.5 786.8 2305.2 795.9 2304.0 C805.0 2302.8 822.8 2298.2 835.5 2293.4 C848.2 2288.6 867.5 2279.0 880.4 2272.3 C893.3 2265.6 915.2 2252.2 921.3 2248.6 C922.3 2245.8 926.9 2232.8 927.9 2230.0 C937.4 2223.7 973.9 2202.8 991.3 2187.8 C1008.7 2172.8 1030.9 2152.0 1044.0 2129.8 C1057.1 2107.6 1071.1 2062.5 1078.4 2040.0 C1085.8 2017.5 1091.3 1998.0 1093.0 1980.0 C1094.7 1962.0 1092.0 1935.6 1090.0 1920.0 C1088.0 1904.4 1083.9 1890.0 1080.0 1876.0 C1076.1 1862.0 1066.2 1836.5 1064.3 1826.4 C1062.4 1816.4 1066.8 1811.6 1067.2 1809.0 C1055.1 1802.0 998.9 1769.0 986.8 1762.0 C986.7 1758.6 986.1 1748.2 986.0 1739.4 C985.9 1730.6 984.9 1714.1 986.0 1703.2 C987.1 1692.3 990.0 1676.1 993.3 1667.0 C996.6 1657.9 1002.1 1648.9 1007.8 1642.3 C1013.5 1635.7 1027.5 1625.7 1031.0 1622.8 C1030.5 1620.7 1028.2 1614.7 1028.0 1609.0 C1027.8 1603.3 1028.3 1591.2 1029.5 1585.0 C1030.7 1578.8 1033.4 1575.0 1036.0 1568.0 C1038.6 1561.0 1044.8 1549.5 1047.0 1538.0 C1049.2 1526.5 1051.2 1504.4 1051.0 1491.0 C1050.8 1477.6 1048.6 1458.3 1045.7 1448.7 C1042.8 1439.1 1037.3 1433.5 1031.7 1427.0 C1026.1 1420.5 1024.5 1415.7 1008.4 1405.2 C992.3 1394.7 937.2 1364.3 924.6 1357.1 C914.9 1356.8 869.7 1355.3 860.0 1355.0 C856.1 1356.2 838.2 1362.1 834.3 1363.3 Z" fill="#2a150c"/>
<g clip-path="url(#silClip)"><path d="M620 1340 L860 1340 L860 1460 L745 1560 L722 1650 L740 1735 L760 1790 L620 1760 Z" fill="url(#ribU)"/><path d="M620 1340 L860 1340 L860 1460 L745 1560 L722 1650 L740 1735 L760 1790 L620 1760 Z" fill="url(#ribTop)"/><path d="M640 1735 L760 1770 L800 1900 L760 1990 L700 2015 L600 1960 Z" fill="url(#ribCB)"/><path d="M652.4 1733.5 L694.3 1761.5 L752 1790 L752 1778 L700 1752 Z" fill="#2a150c"/><path d="M590 1960 L712 2010 L690 2120 L683 2172 L690 2215 L760 2320 L580 2320 Z" fill="url(#ribL)"/><path d="M616 1962 C640 1950 660 1945 700 1995 L712 2012 L712 2030 C680 2020 650 2000 622 1990 Z" fill="#6e3624" opacity="0.8"/><path d="M986.8 1762 L1067.2 1809 L1055 1830 L1007 1824 L985 1790 Z" fill="#6a3422"/><path d="M924.6 1357.1 L1008.4 1405.2 L1031.7 1427 L1008 1413 L985 1400.6 L932 1410 Z" fill="#6e3622"/></g>
<path d="M834.3 1363.3 C826.6 1366.8 797.7 1378.6 783.0 1386.6 C768.3 1394.6 749.4 1406.4 736.5 1416.9 C723.6 1427.4 707.4 1443.6 696.9 1456.5 C686.4 1469.4 674.3 1489.0 666.6 1503.0 C658.9 1517.0 650.5 1533.9 645.6 1549.6 C640.7 1565.3 635.0 1593.9 634.0 1607.9 C633.0 1621.9 636.2 1632.3 638.6 1642.8 C641.0 1653.3 647.9 1669.2 650.3 1677.8 C652.7 1686.4 654.0 1691.6 654.3 1700.0 C654.6 1708.4 652.7 1728.5 652.4 1733.5 C658.7 1737.7 688.0 1757.3 694.3 1761.5 C694.9 1766.3 698.1 1780.1 698.1 1793.2 C698.1 1806.3 696.8 1833.7 694.3 1849.1 C691.8 1864.5 686.3 1883.0 681.3 1895.6 C676.3 1908.2 667.5 1924.8 660.8 1932.9 C654.1 1941.0 643.0 1946.1 636.6 1949.7 C630.2 1953.3 621.1 1954.9 618.0 1957.1 C614.9 1959.3 616.4 1963.5 616.1 1964.6 C616.9 1967.4 620.9 1980.4 621.7 1983.2 C621.1 1985.4 620.2 1986.6 618.0 1998.1 C615.8 2009.6 610.4 2041.8 606.8 2060.0 C603.2 2078.2 595.3 2102.4 594.0 2119.2 C592.7 2136.0 594.5 2158.1 597.9 2172.0 C601.3 2185.9 607.7 2200.5 616.4 2211.6 C625.1 2222.7 644.1 2237.2 656.0 2245.9 C667.9 2254.6 683.3 2263.0 695.6 2269.7 C707.9 2276.4 729.1 2286.9 737.8 2290.8 C746.5 2294.7 748.2 2294.4 753.7 2296.0 C759.2 2297.6 768.5 2300.1 774.8 2301.3 C781.1 2302.5 786.8 2305.2 795.9 2304.0 C805.0 2302.8 822.8 2298.2 835.5 2293.4 C848.2 2288.6 867.5 2279.0 880.4 2272.3 C893.3 2265.6 915.2 2252.2 921.3 2248.6 C922.3 2245.8 926.9 2232.8 927.9 2230.0 C937.4 2223.7 973.9 2202.8 991.3 2187.8 C1008.7 2172.8 1030.9 2152.0 1044.0 2129.8 C1057.1 2107.6 1071.1 2062.5 1078.4 2040.0 C1085.8 2017.5 1091.3 1998.0 1093.0 1980.0 C1094.7 1962.0 1092.0 1935.6 1090.0 1920.0 C1088.0 1904.4 1083.9 1890.0 1080.0 1876.0 C1076.1 1862.0 1066.2 1836.5 1064.3 1826.4 C1062.4 1816.4 1066.8 1811.6 1067.2 1809.0 C1055.1 1802.0 998.9 1769.0 986.8 1762.0 C986.7 1758.6 986.1 1748.2 986.0 1739.4 C985.9 1730.6 984.9 1714.1 986.0 1703.2 C987.1 1692.3 990.0 1676.1 993.3 1667.0 C996.6 1657.9 1002.1 1648.9 1007.8 1642.3 C1013.5 1635.7 1027.5 1625.7 1031.0 1622.8 C1030.5 1620.7 1028.2 1614.7 1028.0 1609.0 C1027.8 1603.3 1028.3 1591.2 1029.5 1585.0 C1030.7 1578.8 1033.4 1575.0 1036.0 1568.0 C1038.6 1561.0 1044.8 1549.5 1047.0 1538.0 C1049.2 1526.5 1051.2 1504.4 1051.0 1491.0 C1050.8 1477.6 1048.6 1458.3 1045.7 1448.7 C1042.8 1439.1 1037.3 1433.5 1031.7 1427.0 C1026.1 1420.5 1024.5 1415.7 1008.4 1405.2 C992.3 1394.7 937.2 1364.3 924.6 1357.1 C914.9 1356.8 869.7 1355.3 860.0 1355.0 C856.1 1356.2 838.2 1362.1 834.3 1363.3 Z" fill="none" stroke="#140a05" stroke-width="2.8"/>
<path d="M652.4 1733.5 L752 1785" stroke="#140a05" stroke-width="2.2" fill="none"/>
<path d="M616.1 1964.6 L709 2010" stroke="#140a05" stroke-width="2" fill="none"/>
<path d="M851.0 1459.0 C844.3 1462.3 818.3 1472.6 806.4 1481.0 C794.5 1489.4 780.5 1502.7 771.4 1514.7 C762.3 1526.7 752.1 1547.3 745.8 1561.3 C739.5 1575.3 733.0 1593.9 729.5 1607.9 C726.0 1621.9 722.8 1642.3 722.5 1654.5 C722.2 1666.7 724.9 1679.9 727.2 1689.4 C729.5 1698.9 734.4 1709.7 738.0 1718.0 C741.6 1726.3 748.9 1736.0 751.0 1745.0 C753.1 1754.0 751.9 1773.3 752.1 1778.3 C754.3 1778.3 762.8 1776.6 767.0 1778.3 C771.2 1780.0 776.4 1783.0 780.0 1789.4 C783.6 1795.8 789.2 1809.4 791.2 1821.1 C793.2 1832.8 793.7 1853.7 793.1 1867.7 C792.5 1881.7 790.0 1901.7 787.5 1914.3 C785.0 1926.9 780.8 1941.7 776.3 1951.5 C771.8 1961.3 763.9 1972.5 757.7 1979.5 C751.6 1986.5 742.6 1993.9 735.3 1998.1 C728.0 2002.3 713.1 2006.0 709.2 2007.4 C709.8 2010.2 712.4 2023.2 713.0 2026.0 C712.0 2032.6 709.0 2056.0 706.0 2070.0 C703.0 2084.0 696.4 2103.9 693.0 2119.2 C689.6 2134.5 684.2 2158.5 683.4 2172.0 C682.6 2185.5 684.7 2198.8 687.7 2209.0 C690.7 2219.2 695.7 2229.3 703.5 2240.0 C711.3 2250.7 726.1 2271.0 740.0 2280.0 C753.9 2289.0 775.0 2301.8 796.0 2300.0 C817.0 2298.2 860.2 2279.3 880.0 2268.0 C899.8 2256.7 920.7 2231.3 927.9 2224.8 C936.6 2218.9 969.4 2199.9 986.0 2185.2 C1002.6 2170.5 1025.7 2148.9 1038.8 2127.1 C1051.9 2105.3 1065.9 2062.1 1073.1 2040.0 C1080.3 2017.9 1085.4 1998.0 1087.0 1980.0 C1088.6 1962.0 1085.8 1935.6 1084.0 1920.0 C1082.2 1904.4 1079.2 1890.0 1075.0 1876.0 C1070.8 1862.0 1057.7 1836.0 1055.7 1826.4 C1053.7 1816.8 1060.5 1814.1 1061.4 1811.9 C1058.4 1814.1 1046.6 1823.4 1041.2 1826.4 C1035.8 1829.4 1030.2 1832.6 1025.2 1832.2 C1020.2 1831.8 1013.2 1828.7 1007.8 1823.5 C1002.4 1818.3 993.6 1807.0 989.0 1797.4 C984.4 1787.8 979.5 1771.3 977.4 1759.7 C975.3 1748.1 974.9 1730.5 975.0 1720.0 C975.1 1709.5 976.4 1697.5 978.0 1690.0 C979.6 1682.5 982.6 1676.7 986.0 1670.0 C989.4 1663.3 995.2 1652.8 1000.6 1645.2 C1006.0 1637.6 1019.0 1623.0 1022.3 1619.1 C1022.3 1617.0 1020.5 1611.9 1022.0 1605.0 C1023.5 1598.1 1029.0 1583.0 1032.0 1573.0 C1035.0 1563.0 1039.9 1550.2 1042.0 1538.0 C1044.1 1525.8 1045.9 1503.0 1046.0 1491.4 C1046.1 1479.9 1045.4 1470.0 1042.6 1461.0 C1039.8 1452.0 1032.2 1438.8 1027.1 1431.6 C1022.0 1424.4 1014.7 1417.7 1008.4 1413.0 C1002.1 1408.3 996.6 1401.1 985.2 1400.6 C973.8 1400.1 940.3 1408.5 932.4 1409.9 C922.6 1417.1 876.8 1450.8 867.0 1458.0 C864.6 1458.2 853.4 1458.8 851.0 1459.0 Z" fill="url(#plateG)" stroke="#140a05" stroke-width="2.6"/>
<path d="M851.0 1459.0 C844.3 1462.3 818.3 1472.6 806.4 1481.0 C794.5 1489.4 780.5 1502.7 771.4 1514.7 C762.3 1526.7 752.1 1547.3 745.8 1561.3 C739.5 1575.3 733.0 1593.9 729.5 1607.9 C726.0 1621.9 722.8 1642.3 722.5 1654.5 C722.2 1666.7 724.9 1679.9 727.2 1689.4 C729.5 1698.9 734.4 1709.7 738.0 1718.0 C741.6 1726.3 748.9 1736.0 751.0 1745.0 C753.1 1754.0 751.9 1773.3 752.1 1778.3 C754.3 1778.3 762.8 1776.6 767.0 1778.3 C771.2 1780.0 776.4 1783.0 780.0 1789.4 C783.6 1795.8 789.2 1809.4 791.2 1821.1 C793.2 1832.8 793.7 1853.7 793.1 1867.7 C792.5 1881.7 790.0 1901.7 787.5 1914.3 C785.0 1926.9 780.8 1941.7 776.3 1951.5 C771.8 1961.3 763.9 1972.5 757.7 1979.5 C751.6 1986.5 742.6 1993.9 735.3 1998.1 C728.0 2002.3 713.1 2006.0 709.2 2007.4 C709.8 2010.2 712.4 2023.2 713.0 2026.0 C712.0 2032.6 709.0 2056.0 706.0 2070.0 C703.0 2084.0 696.4 2103.9 693.0 2119.2 C689.6 2134.5 684.2 2158.5 683.4 2172.0 C682.6 2185.5 684.7 2198.8 687.7 2209.0 C690.7 2219.2 695.7 2229.3 703.5 2240.0 C711.3 2250.7 726.1 2271.0 740.0 2280.0 C753.9 2289.0 775.0 2301.8 796.0 2300.0 C817.0 2298.2 860.2 2279.3 880.0 2268.0 C899.8 2256.7 920.7 2231.3 927.9 2224.8 C936.6 2218.9 969.4 2199.9 986.0 2185.2 C1002.6 2170.5 1025.7 2148.9 1038.8 2127.1 C1051.9 2105.3 1065.9 2062.1 1073.1 2040.0 C1080.3 2017.9 1085.4 1998.0 1087.0 1980.0 C1088.6 1962.0 1085.8 1935.6 1084.0 1920.0 C1082.2 1904.4 1079.2 1890.0 1075.0 1876.0 C1070.8 1862.0 1057.7 1836.0 1055.7 1826.4 C1053.7 1816.8 1060.5 1814.1 1061.4 1811.9 C1058.4 1814.1 1046.6 1823.4 1041.2 1826.4 C1035.8 1829.4 1030.2 1832.6 1025.2 1832.2 C1020.2 1831.8 1013.2 1828.7 1007.8 1823.5 C1002.4 1818.3 993.6 1807.0 989.0 1797.4 C984.4 1787.8 979.5 1771.3 977.4 1759.7 C975.3 1748.1 974.9 1730.5 975.0 1720.0 C975.1 1709.5 976.4 1697.5 978.0 1690.0 C979.6 1682.5 982.6 1676.7 986.0 1670.0 C989.4 1663.3 995.2 1652.8 1000.6 1645.2 C1006.0 1637.6 1019.0 1623.0 1022.3 1619.1 C1022.3 1617.0 1020.5 1611.9 1022.0 1605.0 C1023.5 1598.1 1029.0 1583.0 1032.0 1573.0 C1035.0 1563.0 1039.9 1550.2 1042.0 1538.0 C1044.1 1525.8 1045.9 1503.0 1046.0 1491.4 C1046.1 1479.9 1045.4 1470.0 1042.6 1461.0 C1039.8 1452.0 1032.2 1438.8 1027.1 1431.6 C1022.0 1424.4 1014.7 1417.7 1008.4 1413.0 C1002.1 1408.3 996.6 1401.1 985.2 1400.6 C973.8 1400.1 940.3 1408.5 932.4 1409.9 C922.6 1417.1 876.8 1450.8 867.0 1458.0 C864.6 1458.2 853.4 1458.8 851.0 1459.0 Z" fill="none" stroke="#5a2a1a" stroke-width="9" opacity="0.0"/>
<clipPath id="plateClip"><path d="M851.0 1459.0 C844.3 1462.3 818.3 1472.6 806.4 1481.0 C794.5 1489.4 780.5 1502.7 771.4 1514.7 C762.3 1526.7 752.1 1547.3 745.8 1561.3 C739.5 1575.3 733.0 1593.9 729.5 1607.9 C726.0 1621.9 722.8 1642.3 722.5 1654.5 C722.2 1666.7 724.9 1679.9 727.2 1689.4 C729.5 1698.9 734.4 1709.7 738.0 1718.0 C741.6 1726.3 748.9 1736.0 751.0 1745.0 C753.1 1754.0 751.9 1773.3 752.1 1778.3 C754.3 1778.3 762.8 1776.6 767.0 1778.3 C771.2 1780.0 776.4 1783.0 780.0 1789.4 C783.6 1795.8 789.2 1809.4 791.2 1821.1 C793.2 1832.8 793.7 1853.7 793.1 1867.7 C792.5 1881.7 790.0 1901.7 787.5 1914.3 C785.0 1926.9 780.8 1941.7 776.3 1951.5 C771.8 1961.3 763.9 1972.5 757.7 1979.5 C751.6 1986.5 742.6 1993.9 735.3 1998.1 C728.0 2002.3 713.1 2006.0 709.2 2007.4 C709.8 2010.2 712.4 2023.2 713.0 2026.0 C712.0 2032.6 709.0 2056.0 706.0 2070.0 C703.0 2084.0 696.4 2103.9 693.0 2119.2 C689.6 2134.5 684.2 2158.5 683.4 2172.0 C682.6 2185.5 684.7 2198.8 687.7 2209.0 C690.7 2219.2 695.7 2229.3 703.5 2240.0 C711.3 2250.7 726.1 2271.0 740.0 2280.0 C753.9 2289.0 775.0 2301.8 796.0 2300.0 C817.0 2298.2 860.2 2279.3 880.0 2268.0 C899.8 2256.7 920.7 2231.3 927.9 2224.8 C936.6 2218.9 969.4 2199.9 986.0 2185.2 C1002.6 2170.5 1025.7 2148.9 1038.8 2127.1 C1051.9 2105.3 1065.9 2062.1 1073.1 2040.0 C1080.3 2017.9 1085.4 1998.0 1087.0 1980.0 C1088.6 1962.0 1085.8 1935.6 1084.0 1920.0 C1082.2 1904.4 1079.2 1890.0 1075.0 1876.0 C1070.8 1862.0 1057.7 1836.0 1055.7 1826.4 C1053.7 1816.8 1060.5 1814.1 1061.4 1811.9 C1058.4 1814.1 1046.6 1823.4 1041.2 1826.4 C1035.8 1829.4 1030.2 1832.6 1025.2 1832.2 C1020.2 1831.8 1013.2 1828.7 1007.8 1823.5 C1002.4 1818.3 993.6 1807.0 989.0 1797.4 C984.4 1787.8 979.5 1771.3 977.4 1759.7 C975.3 1748.1 974.9 1730.5 975.0 1720.0 C975.1 1709.5 976.4 1697.5 978.0 1690.0 C979.6 1682.5 982.6 1676.7 986.0 1670.0 C989.4 1663.3 995.2 1652.8 1000.6 1645.2 C1006.0 1637.6 1019.0 1623.0 1022.3 1619.1 C1022.3 1617.0 1020.5 1611.9 1022.0 1605.0 C1023.5 1598.1 1029.0 1583.0 1032.0 1573.0 C1035.0 1563.0 1039.9 1550.2 1042.0 1538.0 C1044.1 1525.8 1045.9 1503.0 1046.0 1491.4 C1046.1 1479.9 1045.4 1470.0 1042.6 1461.0 C1039.8 1452.0 1032.2 1438.8 1027.1 1431.6 C1022.0 1424.4 1014.7 1417.7 1008.4 1413.0 C1002.1 1408.3 996.6 1401.1 985.2 1400.6 C973.8 1400.1 940.3 1408.5 932.4 1409.9 C922.6 1417.1 876.8 1450.8 867.0 1458.0 C864.6 1458.2 853.4 1458.8 851.0 1459.0 Z"/></clipPath>
<g clip-path="url(#plateClip)"><path d="M851.0 1459.0 C844.3 1462.3 818.3 1472.6 806.4 1481.0 C794.5 1489.4 780.5 1502.7 771.4 1514.7 C762.3 1526.7 752.1 1547.3 745.8 1561.3 C739.5 1575.3 733.0 1593.9 729.5 1607.9 C726.0 1621.9 722.8 1642.3 722.5 1654.5 C722.2 1666.7 724.9 1679.9 727.2 1689.4 C729.5 1698.9 734.4 1709.7 738.0 1718.0 C741.6 1726.3 748.9 1736.0 751.0 1745.0 C753.1 1754.0 751.9 1773.3 752.1 1778.3 C754.3 1778.3 762.8 1776.6 767.0 1778.3 C771.2 1780.0 776.4 1783.0 780.0 1789.4 C783.6 1795.8 789.2 1809.4 791.2 1821.1 C793.2 1832.8 793.7 1853.7 793.1 1867.7 C792.5 1881.7 790.0 1901.7 787.5 1914.3 C785.0 1926.9 780.8 1941.7 776.3 1951.5 C771.8 1961.3 763.9 1972.5 757.7 1979.5 C751.6 1986.5 742.6 1993.9 735.3 1998.1 C728.0 2002.3 713.1 2006.0 709.2 2007.4 C709.8 2010.2 712.4 2023.2 713.0 2026.0 C712.0 2032.6 709.0 2056.0 706.0 2070.0 C703.0 2084.0 696.4 2103.9 693.0 2119.2 C689.6 2134.5 684.2 2158.5 683.4 2172.0 C682.6 2185.5 684.7 2198.8 687.7 2209.0 C690.7 2219.2 695.7 2229.3 703.5 2240.0 C711.3 2250.7 726.1 2271.0 740.0 2280.0 C753.9 2289.0 775.0 2301.8 796.0 2300.0 C817.0 2298.2 860.2 2279.3 880.0 2268.0 C899.8 2256.7 920.7 2231.3 927.9 2224.8 C936.6 2218.9 969.4 2199.9 986.0 2185.2 C1002.6 2170.5 1025.7 2148.9 1038.8 2127.1 C1051.9 2105.3 1065.9 2062.1 1073.1 2040.0 C1080.3 2017.9 1085.4 1998.0 1087.0 1980.0 C1088.6 1962.0 1085.8 1935.6 1084.0 1920.0 C1082.2 1904.4 1079.2 1890.0 1075.0 1876.0 C1070.8 1862.0 1057.7 1836.0 1055.7 1826.4 C1053.7 1816.8 1060.5 1814.1 1061.4 1811.9 C1058.4 1814.1 1046.6 1823.4 1041.2 1826.4 C1035.8 1829.4 1030.2 1832.6 1025.2 1832.2 C1020.2 1831.8 1013.2 1828.7 1007.8 1823.5 C1002.4 1818.3 993.6 1807.0 989.0 1797.4 C984.4 1787.8 979.5 1771.3 977.4 1759.7 C975.3 1748.1 974.9 1730.5 975.0 1720.0 C975.1 1709.5 976.4 1697.5 978.0 1690.0 C979.6 1682.5 982.6 1676.7 986.0 1670.0 C989.4 1663.3 995.2 1652.8 1000.6 1645.2 C1006.0 1637.6 1019.0 1623.0 1022.3 1619.1 C1022.3 1617.0 1020.5 1611.9 1022.0 1605.0 C1023.5 1598.1 1029.0 1583.0 1032.0 1573.0 C1035.0 1563.0 1039.9 1550.2 1042.0 1538.0 C1044.1 1525.8 1045.9 1503.0 1046.0 1491.4 C1046.1 1479.9 1045.4 1470.0 1042.6 1461.0 C1039.8 1452.0 1032.2 1438.8 1027.1 1431.6 C1022.0 1424.4 1014.7 1417.7 1008.4 1413.0 C1002.1 1408.3 996.6 1401.1 985.2 1400.6 C973.8 1400.1 940.3 1408.5 932.4 1409.9 C922.6 1417.1 876.8 1450.8 867.0 1458.0 C864.6 1458.2 853.4 1458.8 851.0 1459.0 Z" fill="none" stroke="#1a0c06" stroke-width="15"/><path d="M851.0 1459.0 C844.3 1462.3 818.3 1472.6 806.4 1481.0 C794.5 1489.4 780.5 1502.7 771.4 1514.7 C762.3 1526.7 752.1 1547.3 745.8 1561.3 C739.5 1575.3 733.0 1593.9 729.5 1607.9 C726.0 1621.9 722.8 1642.3 722.5 1654.5 C722.2 1666.7 724.9 1679.9 727.2 1689.4 C729.5 1698.9 734.4 1709.7 738.0 1718.0 C741.6 1726.3 748.9 1736.0 751.0 1745.0 C753.1 1754.0 751.9 1773.3 752.1 1778.3 C754.3 1778.3 762.8 1776.6 767.0 1778.3 C771.2 1780.0 776.4 1783.0 780.0 1789.4 C783.6 1795.8 789.2 1809.4 791.2 1821.1 C793.2 1832.8 793.7 1853.7 793.1 1867.7 C792.5 1881.7 790.0 1901.7 787.5 1914.3 C785.0 1926.9 780.8 1941.7 776.3 1951.5 C771.8 1961.3 763.9 1972.5 757.7 1979.5 C751.6 1986.5 742.6 1993.9 735.3 1998.1 C728.0 2002.3 713.1 2006.0 709.2 2007.4 C709.8 2010.2 712.4 2023.2 713.0 2026.0 C712.0 2032.6 709.0 2056.0 706.0 2070.0 C703.0 2084.0 696.4 2103.9 693.0 2119.2 C689.6 2134.5 684.2 2158.5 683.4 2172.0 C682.6 2185.5 684.7 2198.8 687.7 2209.0 C690.7 2219.2 695.7 2229.3 703.5 2240.0 C711.3 2250.7 726.1 2271.0 740.0 2280.0 C753.9 2289.0 775.0 2301.8 796.0 2300.0 C817.0 2298.2 860.2 2279.3 880.0 2268.0 C899.8 2256.7 920.7 2231.3 927.9 2224.8 C936.6 2218.9 969.4 2199.9 986.0 2185.2 C1002.6 2170.5 1025.7 2148.9 1038.8 2127.1 C1051.9 2105.3 1065.9 2062.1 1073.1 2040.0 C1080.3 2017.9 1085.4 1998.0 1087.0 1980.0 C1088.6 1962.0 1085.8 1935.6 1084.0 1920.0 C1082.2 1904.4 1079.2 1890.0 1075.0 1876.0 C1070.8 1862.0 1057.7 1836.0 1055.7 1826.4 C1053.7 1816.8 1060.5 1814.1 1061.4 1811.9 C1058.4 1814.1 1046.6 1823.4 1041.2 1826.4 C1035.8 1829.4 1030.2 1832.6 1025.2 1832.2 C1020.2 1831.8 1013.2 1828.7 1007.8 1823.5 C1002.4 1818.3 993.6 1807.0 989.0 1797.4 C984.4 1787.8 979.5 1771.3 977.4 1759.7 C975.3 1748.1 974.9 1730.5 975.0 1720.0 C975.1 1709.5 976.4 1697.5 978.0 1690.0 C979.6 1682.5 982.6 1676.7 986.0 1670.0 C989.4 1663.3 995.2 1652.8 1000.6 1645.2 C1006.0 1637.6 1019.0 1623.0 1022.3 1619.1 C1022.3 1617.0 1020.5 1611.9 1022.0 1605.0 C1023.5 1598.1 1029.0 1583.0 1032.0 1573.0 C1035.0 1563.0 1039.9 1550.2 1042.0 1538.0 C1044.1 1525.8 1045.9 1503.0 1046.0 1491.4 C1046.1 1479.9 1045.4 1470.0 1042.6 1461.0 C1039.8 1452.0 1032.2 1438.8 1027.1 1431.6 C1022.0 1424.4 1014.7 1417.7 1008.4 1413.0 C1002.1 1408.3 996.6 1401.1 985.2 1400.6 C973.8 1400.1 940.3 1408.5 932.4 1409.9 C922.6 1417.1 876.8 1450.8 867.0 1458.0 C864.6 1458.2 853.4 1458.8 851.0 1459.0 Z" fill="none" stroke="#5a2c1e" stroke-width="12"/></g>
<path d="M851.0 1459.0 C844.3 1462.3 818.3 1472.6 806.4 1481.0 C794.5 1489.4 780.5 1502.7 771.4 1514.7 C762.3 1526.7 752.1 1547.3 745.8 1561.3 C739.5 1575.3 733.0 1593.9 729.5 1607.9 C726.0 1621.9 722.8 1642.3 722.5 1654.5 C722.2 1666.7 724.9 1679.9 727.2 1689.4 C729.5 1698.9 734.4 1709.7 738.0 1718.0 C741.6 1726.3 748.9 1736.0 751.0 1745.0 C753.1 1754.0 751.9 1773.3 752.1 1778.3 C754.3 1778.3 762.8 1776.6 767.0 1778.3 C771.2 1780.0 776.4 1783.0 780.0 1789.4 C783.6 1795.8 789.2 1809.4 791.2 1821.1 C793.2 1832.8 793.7 1853.7 793.1 1867.7 C792.5 1881.7 790.0 1901.7 787.5 1914.3 C785.0 1926.9 780.8 1941.7 776.3 1951.5 C771.8 1961.3 763.9 1972.5 757.7 1979.5 C751.6 1986.5 742.6 1993.9 735.3 1998.1 C728.0 2002.3 713.1 2006.0 709.2 2007.4 C709.8 2010.2 712.4 2023.2 713.0 2026.0 C712.0 2032.6 709.0 2056.0 706.0 2070.0 C703.0 2084.0 696.4 2103.9 693.0 2119.2 C689.6 2134.5 684.2 2158.5 683.4 2172.0 C682.6 2185.5 684.7 2198.8 687.7 2209.0 C690.7 2219.2 695.7 2229.3 703.5 2240.0 C711.3 2250.7 726.1 2271.0 740.0 2280.0 C753.9 2289.0 775.0 2301.8 796.0 2300.0 C817.0 2298.2 860.2 2279.3 880.0 2268.0 C899.8 2256.7 920.7 2231.3 927.9 2224.8 C936.6 2218.9 969.4 2199.9 986.0 2185.2 C1002.6 2170.5 1025.7 2148.9 1038.8 2127.1 C1051.9 2105.3 1065.9 2062.1 1073.1 2040.0 C1080.3 2017.9 1085.4 1998.0 1087.0 1980.0 C1088.6 1962.0 1085.8 1935.6 1084.0 1920.0 C1082.2 1904.4 1079.2 1890.0 1075.0 1876.0 C1070.8 1862.0 1057.7 1836.0 1055.7 1826.4 C1053.7 1816.8 1060.5 1814.1 1061.4 1811.9 C1058.4 1814.1 1046.6 1823.4 1041.2 1826.4 C1035.8 1829.4 1030.2 1832.6 1025.2 1832.2 C1020.2 1831.8 1013.2 1828.7 1007.8 1823.5 C1002.4 1818.3 993.6 1807.0 989.0 1797.4 C984.4 1787.8 979.5 1771.3 977.4 1759.7 C975.3 1748.1 974.9 1730.5 975.0 1720.0 C975.1 1709.5 976.4 1697.5 978.0 1690.0 C979.6 1682.5 982.6 1676.7 986.0 1670.0 C989.4 1663.3 995.2 1652.8 1000.6 1645.2 C1006.0 1637.6 1019.0 1623.0 1022.3 1619.1 C1022.3 1617.0 1020.5 1611.9 1022.0 1605.0 C1023.5 1598.1 1029.0 1583.0 1032.0 1573.0 C1035.0 1563.0 1039.9 1550.2 1042.0 1538.0 C1044.1 1525.8 1045.9 1503.0 1046.0 1491.4 C1046.1 1479.9 1045.4 1470.0 1042.6 1461.0 C1039.8 1452.0 1032.2 1438.8 1027.1 1431.6 C1022.0 1424.4 1014.7 1417.7 1008.4 1413.0 C1002.1 1408.3 996.6 1401.1 985.2 1400.6 C973.8 1400.1 940.3 1408.5 932.4 1409.9 C922.6 1417.1 876.8 1450.8 867.0 1458.0 C864.6 1458.2 853.4 1458.8 851.0 1459.0 Z" fill="none" stroke="#140a05" stroke-width="2.6"/>
<path d="M777 1398 C800 1378 815 1370 834.3 1363.3 L834.5 1396.7 Z" fill="#6a3424"/>
<path d="M777.1 1398.2 L834.5 1396.7 L857.0 1462.7 L850.0 1453.4 L777.1 1408.3 Z" fill="#2a1208" stroke="#140a05" stroke-width="2"/>
<path d="M828.0 1150.0 L846.0 1142.0 L867.1 1458.0 L857.0 1462.7 L834.5 1396.7 L834.3 1340.0 Z" fill="url(#neckG)" stroke="#140a05" stroke-width="2.2"/>
<path d="M845.5 1142.6 L889.0 1142.6 L923.0 1340.0 L986.0 1752.0 L962.9 1763.3 L892.0 1798.0 L859.4 1340.0 Z" fill="#1d1d1d" stroke="#0a0a0a" stroke-width="2.4"/>
<path d="M845.5 1142.6 L851.0 1142.6 L865.0 1340.0 L898.0 1795.0 L892.0 1798.0 L859.4 1340.0 Z" fill="#0e0e0e"/>
<path d="M857 1150 L908 1792" stroke="#0a0a0a" stroke-width="2.2"/>
<path d="M860 1150 L911 1792" stroke="#2c2c2c" stroke-width="1.4"/>
<path d="M866 1150 L925 1786" stroke="#0a0a0a" stroke-width="2.2"/>
<path d="M869 1150 L928 1786" stroke="#2c2c2c" stroke-width="1.4"/>
<path d="M875 1148 L942 1780" stroke="#0a0a0a" stroke-width="2.2"/>
<path d="M878 1148 L945 1780" stroke="#2c2c2c" stroke-width="1.4"/>
<path d="M883 1148 L958 1772" stroke="#0a0a0a" stroke-width="2.2"/>
<path d="M886 1148 L961 1772" stroke="#2c2c2c" stroke-width="1.4"/>
<path d="M830 1836 C822 1860 812 1900 802 1935 C795 1960 790 1980 770 1996" fill="none" stroke="#140a05" stroke-width="10" stroke-linecap="round"/>
<path d="M830 1836 C822 1860 812 1900 802 1935 C795 1960 790 1980 770 1996" fill="none" stroke="#2a140b" stroke-width="6" stroke-linecap="round"/>
<circle cx="829" cy="1832" r="10" fill="#3a1c10" stroke="#140a05" stroke-width="2.4"/>
<circle cx="832" cy="1829" r="5.5" fill="#24110a"/>
<circle cx="765" cy="1998" r="10" fill="#3a1c10" stroke="#140a05" stroke-width="2.4"/>
<circle cx="762" cy="2000" r="5.5" fill="#24110a"/>
<path d="M1000 1866 C994 1880 986 1890 972 1896" fill="none" stroke="#140a05" stroke-width="9" stroke-linecap="round"/>
<path d="M1000 1866 C994 1880 986 1890 972 1896" fill="none" stroke="#2a140b" stroke-width="5" stroke-linecap="round"/>
<ellipse cx="1002" cy="1858" rx="8" ry="10" fill="#24110a" stroke="#140a05" stroke-width="2.4"/>
<path d="M846.8 1897.1 L920 1854.3 L976.5 1874.6 L963 1893 C955 1898 948 1903 938.8 1906.5 L879.4 1931.9 Z" fill="#dbc3a6" stroke="#140a05" stroke-width="2"/>
<path d="M846.8 1897.1 L879.4 1931.9 L938.8 1906.5 L940 1901 L881 1925 L851 1895 Z" fill="#c0a486"/>
<path d="M886.2 2034.2 C895.2 2030.2 944.8 2008.2 953.8 2004.2 C954.0 2007.4 955.6 2023.4 955.3 2028.2 C955.0 2033.0 954.6 2027.9 951.7 2040.0 C948.8 2052.1 937.1 2098.1 933.2 2119.2 C929.3 2140.3 924.4 2182.6 922.6 2198.4 C920.8 2214.2 920.3 2232.7 920.0 2238.0 C915.1 2239.8 887.9 2249.4 883.0 2251.2 C885.1 2240.6 896.4 2193.1 898.9 2172.0 C901.4 2150.9 902.4 2109.1 901.5 2092.8 C900.6 2076.5 894.0 2057.8 892.0 2050.0 C890.0 2042.2 887.0 2036.3 886.2 2034.2 Z" fill="#dcc3a5" stroke="#140a05" stroke-width="2"/>
<path d="M926 1775 L906 2058" stroke="#0c0c0c" stroke-width="6.2"/>
<path d="M926.3 1775 L906.3 2058" stroke="#2e2e2e" stroke-width="2.4"/>
<path d="M937.5 1772 L924 2053" stroke="#0c0c0c" stroke-width="6.2"/>
<path d="M937.8 1772 L924.3 2053" stroke="#2e2e2e" stroke-width="2.4"/>
<path d="M949 1768 L939.6 2045" stroke="#0c0c0c" stroke-width="6.2"/>
<path d="M949.3 1768 L939.9 2045" stroke="#2e2e2e" stroke-width="2.4"/>
<path d="M960.5 1762 L952.5 2032" stroke="#0c0c0c" stroke-width="6.2"/>
<path d="M960.8 1762 L952.8 2032" stroke="#2e2e2e" stroke-width="2.4"/>
<path d="M906 2052 C906 2062 903 2064 897 2063 C894 2062 895 2059 898 2058" stroke="#111" stroke-width="4.4" fill="none"/>
<path d="M924 2047 C924 2057 921 2059 915 2058 C912 2057 913 2054 916 2053" stroke="#111" stroke-width="4.4" fill="none"/>
<path d="M939.6 2039 C939.6 2049 936.6 2051 930.6 2050 C927.6 2049 928.6 2046 931.6 2045" stroke="#111" stroke-width="4.4" fill="none"/>
<path d="M952.5 2026 C952.5 2036 949.5 2038 943.5 2037 C940.5 2036 941.5 2033 944.5 2032" stroke="#111" stroke-width="4.4" fill="none"/>
<path d="M698.2 2232.7 C699.8 2229.2 708.5 2209.8 710.1 2206.3 C712.4 2207.4 725.0 2213.1 727.3 2214.2 C726.2 2218.4 719.1 2237.8 719.4 2245.9 C719.7 2254.0 725.7 2268.7 729.9 2275.0 C734.1 2281.3 748.2 2290.9 751.0 2293.4 C749.1 2292.4 742.2 2290.2 737.0 2286.0 C731.8 2281.8 717.2 2269.1 712.0 2262.0 C706.8 2254.9 700.0 2236.6 698.2 2232.7 Z" fill="#8f765e" stroke="#140a05" stroke-width="2"/>
<path d="M727.3 2214.2 C731.5 2209.3 749.1 2185.0 759.0 2177.3 C768.9 2169.6 792.8 2159.7 801.2 2156.2 C809.6 2152.7 817.0 2151.3 822.3 2150.9 C827.6 2150.5 836.2 2152.1 840.8 2153.5 C845.4 2154.9 852.7 2158.2 856.6 2161.4 C860.5 2164.6 866.6 2172.4 869.8 2177.3 C873.0 2182.2 878.6 2188.5 880.4 2198.4 C882.2 2208.3 882.7 2244.2 883.0 2251.2 C887.6 2249.3 912.8 2238.6 917.4 2236.7 C918.3 2237.2 923.5 2239.0 924.0 2240.6 C924.5 2242.2 921.7 2247.5 921.3 2248.6 C915.8 2251.8 891.8 2266.3 880.4 2272.3 C869.0 2278.3 846.8 2289.2 835.5 2293.4 C824.2 2297.6 804.0 2302.9 795.9 2304.0 C787.8 2305.1 781.1 2303.1 774.8 2301.3 C768.5 2299.5 754.4 2294.3 748.4 2290.8 C742.4 2287.3 733.8 2281.0 729.9 2275.0 C726.0 2269.0 719.7 2254.0 719.4 2245.9 C719.1 2237.8 726.2 2218.4 727.3 2214.2 Z" fill="url(#tanG)" stroke="#140a05" stroke-width="2.2"/>
<path d="M883 2251.2 L917.4 2236.7" stroke="#140a05" stroke-width="1.6"/>
<path d="M866 992 L882 984" stroke="#140a05" stroke-width="15" stroke-linecap="round"/><path d="M866 992 L882 984" stroke="#e3cbae" stroke-width="12" stroke-linecap="round"/><path d="M866 995.0 L882 987.0" stroke="#c0a284" stroke-width="4.199999999999999"/><path d="M878.8 966.7 C880.3 962.3 885.6 960.0 889.7 959.0 C893.9 958.0 899.8 958.2 903.7 960.5 C907.6 962.8 911.7 968.6 913.0 973.0 C914.3 977.4 913.5 983.1 911.4 987.0 C909.3 990.9 905.0 994.9 900.6 996.2 C896.2 997.5 888.4 996.5 885.0 994.7 C881.6 992.9 881.4 990.1 880.4 985.4 C879.4 980.7 877.2 971.1 878.8 966.7 Z" fill="#a5876a" stroke="#140a05" stroke-width="2"/><path d="M876.8 960.7 C878.3 956.3 883.6 954.0 887.7 953.0 C891.9 952.0 897.8 952.2 901.7 954.5 C905.6 956.8 909.7 962.6 911.0 967.0 C912.3 971.4 911.5 977.1 909.4 981.0 C907.3 984.9 903.0 988.9 898.6 990.2 C894.2 991.5 886.4 990.5 883.0 988.7 C879.6 986.9 879.4 984.1 878.4 979.4 C877.4 974.7 875.2 965.1 876.8 960.7 Z" fill="#dbc1a2" stroke="#140a05" stroke-width="2"/>
<path d="M873 1058 L892 1050" stroke="#140a05" stroke-width="17" stroke-linecap="round"/><path d="M873 1058 L892 1050" stroke="#e3cbae" stroke-width="14" stroke-linecap="round"/><path d="M873 1061.5 L892 1053.5" stroke="#c0a284" stroke-width="4.8999999999999995"/><path d="M895.9 1035.0 C897.2 1030.3 897.8 1025.7 900.6 1022.6 C903.5 1019.5 908.6 1016.9 913.0 1016.4 C917.4 1015.9 923.4 1016.6 927.0 1019.5 C930.6 1022.4 933.7 1028.6 934.7 1033.5 C935.7 1038.4 934.5 1043.8 933.2 1049.0 C931.9 1054.2 930.4 1060.7 927.0 1064.6 C923.6 1068.5 917.4 1071.8 913.0 1072.3 C908.6 1072.8 902.1 1070.8 900.6 1067.7 C899.1 1064.6 903.2 1056.0 903.7 1053.7 C901.9 1053.2 894.1 1053.7 892.8 1050.6 C891.5 1047.5 894.6 1039.7 895.9 1035.0 Z" fill="#a5876a" stroke="#140a05" stroke-width="2"/><path d="M893.9 1029.0 C895.2 1024.3 895.8 1019.7 898.6 1016.6 C901.5 1013.5 906.6 1010.9 911.0 1010.4 C915.4 1009.9 921.4 1010.6 925.0 1013.5 C928.6 1016.4 931.7 1022.6 932.7 1027.5 C933.7 1032.4 932.5 1037.8 931.2 1043.0 C929.9 1048.2 928.4 1054.7 925.0 1058.6 C921.6 1062.5 915.4 1065.8 911.0 1066.3 C906.6 1066.8 900.1 1064.8 898.6 1061.7 C897.1 1058.6 901.2 1050.0 901.7 1047.7 C899.9 1047.2 892.1 1047.7 890.8 1044.6 C889.5 1041.5 892.6 1033.7 893.9 1029.0 Z" fill="#dbc1a2" stroke="#140a05" stroke-width="2"/>
<path d="M756.0 944.0 C756.4 947.5 756.5 960.3 758.8 967.0 C761.1 973.7 767.2 981.3 771.2 988.7 C775.2 996.1 781.5 1008.5 785.2 1016.6 C788.9 1024.7 793.1 1034.6 796.1 1043.0 C799.1 1051.4 803.3 1064.3 805.4 1072.5 C807.5 1080.7 809.8 1091.8 810.0 1097.4 C810.2 1103.0 808.0 1106.1 807.0 1109.8 C806.0 1113.5 801.8 1117.5 803.0 1122.0 C804.2 1126.5 811.2 1135.8 815.0 1140.0 C818.8 1144.2 826.0 1148.5 828.0 1150.0 C830.7 1148.8 843.3 1143.2 846.0 1142.0 C853.0 1142.0 885.4 1142.0 892.4 1142.0 C892.2 1139.0 891.3 1128.4 890.8 1122.2 C890.3 1116.0 890.0 1106.5 889.3 1100.5 C888.6 1094.5 887.5 1088.2 886.1 1081.9 C884.7 1075.6 882.6 1065.6 880.0 1058.6 C877.4 1051.6 873.2 1043.5 869.0 1035.3 C864.8 1027.1 869.0 1017.9 852.0 1004.2 C835.0 990.5 770.4 953.0 756.0 944.0 Z" fill="#3a190d" stroke="#140a05" stroke-width="2.4"/>
<path d="M810 1003 C826 1025 838 1050 844.2 1066.3 C850 1090 851 1120 852 1144" stroke="#8a3a20" stroke-width="2.4" fill="none"/>
<path d="M844.2 1002.7 C858 1015 866 1028 869 1035.3 C876 1048 880 1060 883 1074 C885 1100 886 1120 886 1144" stroke="#8a3a20" stroke-width="2.4" fill="none"/>
<path d="M846 1068 C860 1080 866 1100 870 1144 M851 1063 C868 1080 874 1100 878 1144" stroke="#101010" stroke-width="4" fill="none"/>
<path d="M760.0 925.0 C757.2 917.1 768.7 907.3 773.1 902.4 C777.5 897.5 782.0 897.2 786.4 895.7 C790.8 894.2 794.9 893.3 799.6 893.3 C804.3 893.3 808.6 893.5 814.5 895.7 C820.4 897.9 829.0 902.8 835.2 906.5 C841.4 910.2 847.0 913.6 851.8 918.1 C856.6 922.6 860.9 928.4 864.2 933.8 C867.5 939.2 870.2 944.9 871.7 950.4 C873.2 955.9 873.3 961.5 873.3 967.0 C873.3 972.5 873.2 979.0 871.7 983.5 C870.2 988.0 867.5 991.1 864.2 994.3 C860.9 997.5 855.4 1001.0 851.8 1002.6 C848.2 1004.2 846.3 1004.1 842.7 1004.2 C839.1 1004.3 833.8 1005.4 830.0 1003.0 C826.2 1000.6 826.7 998.8 820.0 990.0 C813.3 981.2 800.0 960.8 790.0 950.0 C780.0 939.2 762.8 932.9 760.0 925.0 Z" fill="url(#rimG)" stroke="#140a05" stroke-width="2.4"/>
<path d="M752.8 946.3 C750.5 938.5 754.3 930.5 756.0 925.0 C757.7 919.5 759.9 916.2 763.2 913.1 C766.5 910.0 770.5 907.3 775.6 906.5 C780.7 905.7 787.3 906.4 793.8 908.2 C800.3 910.0 807.6 913.0 814.5 917.3 C821.4 921.6 829.7 927.6 835.2 933.8 C840.7 940.0 845.1 947.6 847.7 954.5 C850.3 961.4 851.1 968.6 851.0 975.2 C850.9 981.8 849.0 989.7 846.8 994.3 C844.6 998.9 841.7 1001.4 837.7 1002.6 C833.7 1003.8 828.0 1003.2 822.8 1001.7 C817.6 1000.2 811.8 996.3 806.3 993.5 C800.8 990.7 796.0 988.6 790.0 985.0 C784.0 981.4 776.2 978.5 770.0 972.0 C763.8 965.5 755.1 954.1 752.8 946.3 Z" fill="#2e160c" stroke="#140a05" stroke-width="2.4"/>
<path d="M791.3 990 C800 1005 815 1012 830 1012 L842 1004 C825 1004 806 995 792 978 Z" fill="#7a3822"/>
<path d="M791.3 973.6 C791.6 969.3 791.3 954.0 793.0 947.9 C794.7 941.8 797.7 938.5 801.3 937.1 C804.9 935.7 810.6 937.4 814.5 939.6 C818.4 941.8 822.1 945.8 824.5 950.4 C826.9 955.0 828.3 962.2 828.6 967.0 C828.9 971.8 827.8 977.1 826.1 979.4 C824.5 981.7 821.7 982.0 818.7 981.0 C815.7 980.0 810.4 977.1 807.9 973.6 C805.4 970.1 804.1 963.5 803.8 960.3 C803.5 957.1 805.1 954.6 806.3 954.5 C807.5 954.4 810.1 957.4 811.2 959.5 C812.3 961.6 812.6 965.8 812.9 967.0" fill="none" stroke="#120904" stroke-width="3"/>
<path d="M806 944 C818 944 828 958 827 972" fill="none" stroke="#8a4428" stroke-width="3"/>
<g transform="rotate(-24 797.6 1026)"><rect x="787.6" y="1019.5" width="20" height="13" rx="6" fill="#dec6a8" stroke="#140a05" stroke-width="1.6"/><rect x="789.6" y="1027" width="16" height="4.5" rx="3" fill="#b89a7a"/></g>
<g transform="rotate(-24 819.6 1011.9)"><rect x="808.6" y="1005.9" width="22" height="12" rx="6" fill="#dec6a8" stroke="#140a05" stroke-width="1.6"/><rect x="810.6" y="1012.9" width="18" height="4.0" rx="3" fill="#b89a7a"/></g>
<g transform="rotate(-24 834 1033.7)"><rect x="827.0" y="1027.7" width="14" height="12" rx="6" fill="#dec6a8" stroke="#140a05" stroke-width="1.6"/><rect x="829.0" y="1034.7" width="10" height="4.0" rx="3" fill="#b89a7a"/></g>
<g transform="rotate(-24 822.5 1089.6)"><rect x="812.5" y="1083.1" width="20" height="13" rx="6" fill="#dec6a8" stroke="#140a05" stroke-width="1.6"/><rect x="814.5" y="1090.6" width="16" height="4.5" rx="3" fill="#b89a7a"/></g>
<path d="M789.9 1052 L814.7 1043" stroke="#140a05" stroke-width="19" stroke-linecap="round"/><path d="M789.9 1052 L814.7 1043" stroke="#e3cbae" stroke-width="16" stroke-linecap="round"/><path d="M789.9 1056.0 L814.7 1047.0" stroke="#c0a284" stroke-width="5.6"/><path d="M740.6 1086.3 C740.1 1081.4 740.4 1074.6 742.2 1069.2 C744.0 1063.8 747.6 1057.3 751.5 1053.7 C755.4 1050.1 761.4 1048.0 765.5 1047.5 C769.6 1047.0 773.7 1049.0 776.3 1050.6 C778.9 1052.1 778.7 1055.8 781.0 1056.8 C783.3 1057.8 788.8 1056.8 790.3 1056.8 C789.8 1059.7 789.0 1068.7 787.2 1073.9 C785.4 1079.1 781.6 1083.5 779.5 1087.9 C777.4 1092.3 778.2 1097.7 774.8 1100.3 C771.4 1102.9 764.2 1103.7 759.3 1103.4 C754.4 1103.1 748.4 1101.6 745.3 1098.7 C742.2 1095.8 741.1 1091.2 740.6 1086.3 Z" fill="#a5876a" stroke="#140a05" stroke-width="2"/><path d="M738.6 1080.3 C738.1 1075.4 738.4 1068.6 740.2 1063.2 C742.0 1057.8 745.6 1051.3 749.5 1047.7 C753.4 1044.1 759.4 1042.0 763.5 1041.5 C767.6 1041.0 771.7 1043.0 774.3 1044.6 C776.9 1046.1 776.7 1049.8 779.0 1050.8 C781.3 1051.8 786.8 1050.8 788.3 1050.8 C787.8 1053.7 787.0 1062.7 785.2 1067.9 C783.4 1073.1 779.6 1077.5 777.5 1081.9 C775.4 1086.3 776.2 1091.7 772.8 1094.3 C769.4 1096.9 762.2 1097.7 757.3 1097.4 C752.4 1097.1 746.4 1095.6 743.3 1092.7 C740.2 1089.8 739.1 1085.2 738.6 1080.3 Z" fill="#dbc1a2" stroke="#140a05" stroke-width="2"/>
<path d="M819.4 1134.7 L842.7 1122" stroke="#140a05" stroke-width="17" stroke-linecap="round"/><path d="M819.4 1134.7 L842.7 1122" stroke="#e3cbae" stroke-width="14" stroke-linecap="round"/><path d="M819.4 1138.2 L842.7 1125.5" stroke="#c0a284" stroke-width="4.8999999999999995"/><path d="M767.0 1153.1 C767.2 1148.4 769.6 1141.0 773.2 1137.6 C776.8 1134.2 783.9 1133.2 788.8 1132.9 C793.7 1132.6 798.3 1134.7 802.7 1136.0 C807.1 1137.3 813.1 1139.9 815.2 1140.7 C816.8 1142.2 823.5 1146.9 824.5 1150.0 C825.5 1153.1 824.5 1156.2 821.4 1159.3 C818.3 1162.4 811.3 1166.8 805.9 1168.6 C800.5 1170.4 794.5 1170.7 788.8 1170.2 C783.1 1169.7 775.3 1168.3 771.7 1165.5 C768.1 1162.7 766.8 1157.8 767.0 1153.1 Z" fill="#a5876a" stroke="#140a05" stroke-width="2"/><path d="M765.0 1147.1 C765.2 1142.4 767.6 1135.0 771.2 1131.6 C774.8 1128.2 781.9 1127.2 786.8 1126.9 C791.7 1126.6 796.3 1128.7 800.7 1130.0 C805.1 1131.3 811.1 1133.9 813.2 1134.7 C814.8 1136.2 821.5 1140.9 822.5 1144.0 C823.5 1147.1 822.5 1150.2 819.4 1153.3 C816.3 1156.4 809.3 1160.8 803.9 1162.6 C798.5 1164.4 792.5 1164.7 786.8 1164.2 C781.1 1163.7 773.3 1162.3 769.7 1159.5 C766.1 1156.7 764.8 1151.8 765.0 1147.1 Z" fill="#dbc1a2" stroke="#140a05" stroke-width="2"/>
<rect x="0" y="0" width="3200" height="3200" fill="url(#wm)"/>
</svg>
</body></html>
